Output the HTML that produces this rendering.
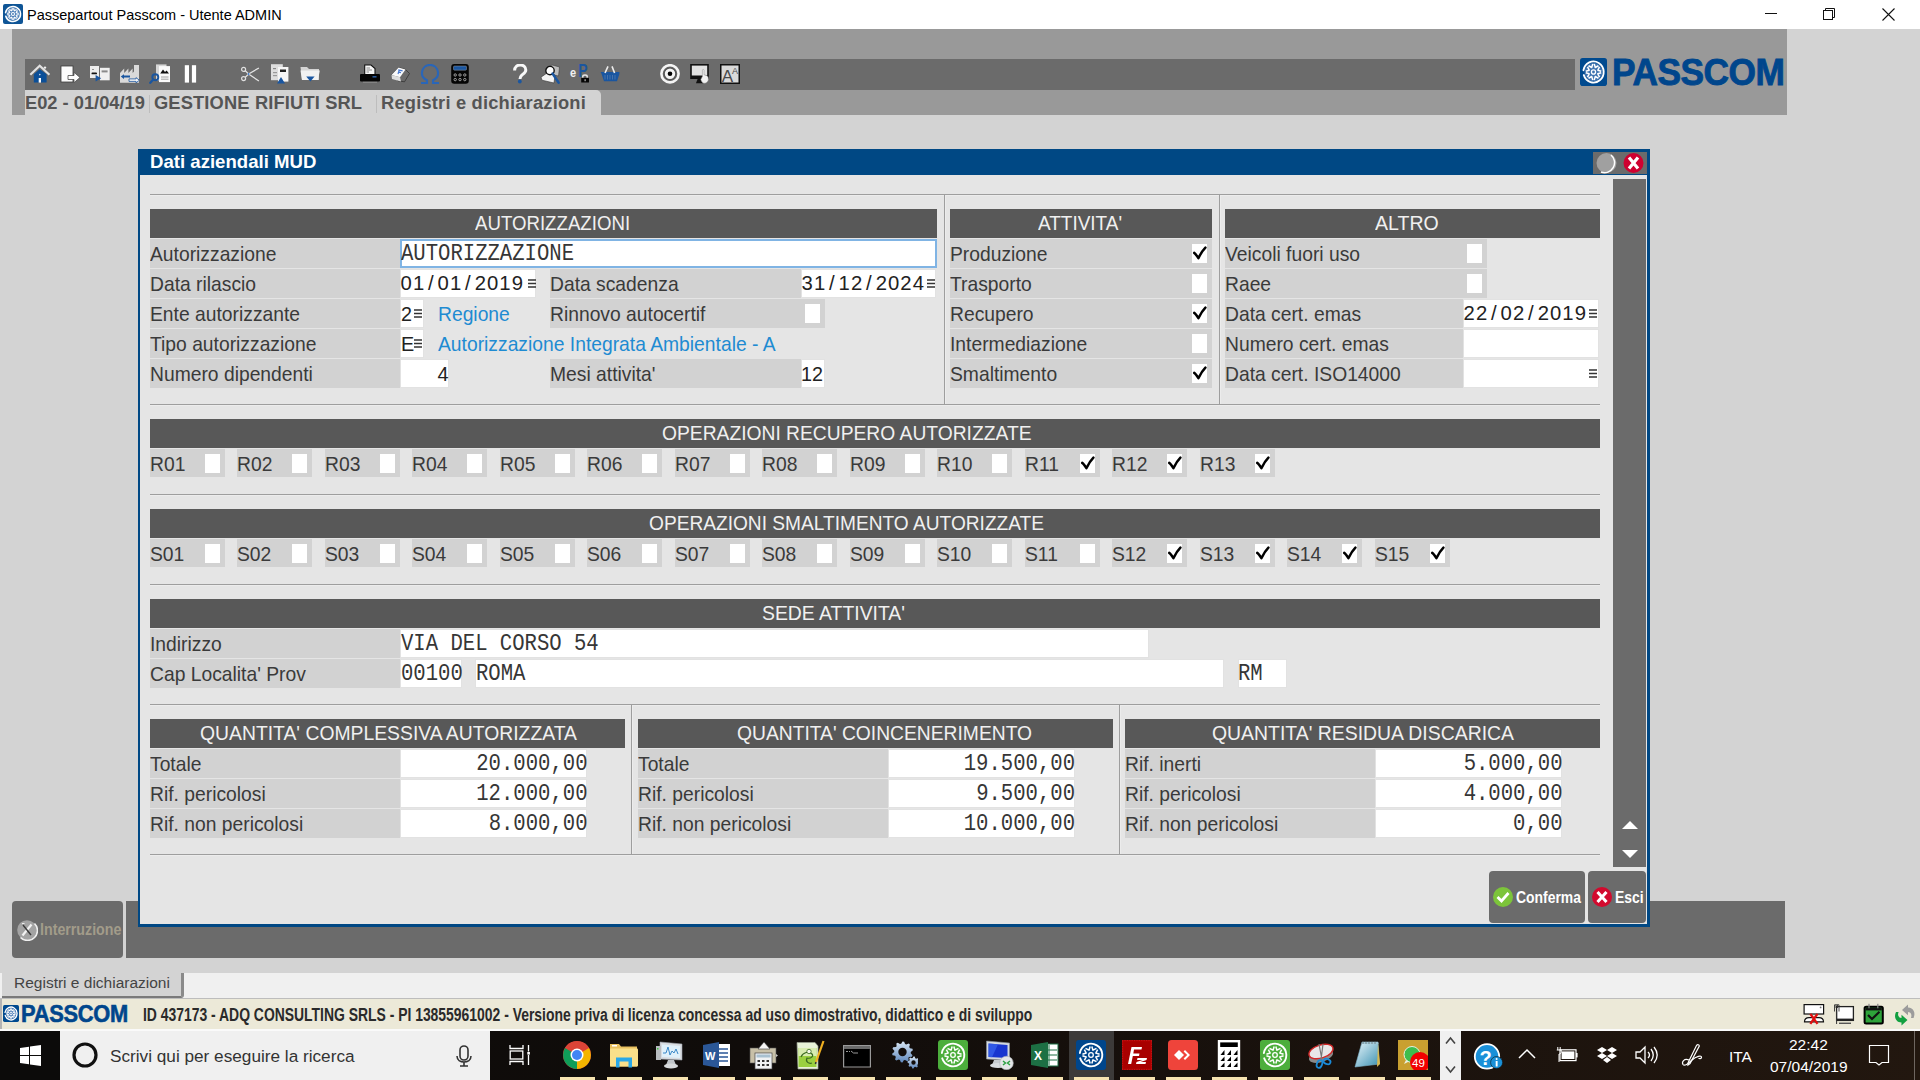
<!DOCTYPE html>
<html><head><meta charset="utf-8"><title>Passcom</title>
<style>
html,body{margin:0;padding:0;width:1920px;height:1080px;overflow:hidden;background:#d3d3d3}
body>div,body>svg{position:absolute}
</style></head><body>
<div style="left:0px;top:0px;width:1920px;height:29px;background:#ffffff;"></div>
<svg style="left:3px;top:4px" width="20" height="20" viewBox="0 0 30 30"><rect x="0" y="0" width="30" height="30" rx="3" fill="#0f5596"/><circle cx="15" cy="15" r="10" fill="#4f80b8"/><path d="M3.87 13.04 A11.3 11.3 0 1 1 4.19 18.30" fill="none" stroke="#fff" stroke-width="2.28" stroke-linecap="round"/><path d="M23.56 15.82 L19.80 16.99 L21.64 20.47 M20.47 21.64 L16.99 19.80 L15.82 23.56 M14.18 23.56 L13.01 19.80 L9.53 21.64 M8.36 20.47 L10.20 16.99 L6.44 15.82 M6.44 14.18 L10.20 13.01 L8.36 9.53 M9.53 8.36 L13.01 10.20 L14.18 6.44 M15.82 6.44 L16.99 10.20 L20.47 8.36 M21.64 9.53 L19.80 13.01 L23.56 14.18 " fill="none" stroke="#fff" stroke-width="1.80" stroke-linejoin="round"/><circle cx="15" cy="15" r="2.3" fill="none" stroke="#fff" stroke-width="1.56"/></svg>
<div style="left:27px;top:5.55px;white-space:nowrap;line-height:18.85px;font-family:'Liberation Sans', sans-serif;font-size:14.5px;color:#000;font-weight:normal;text-align:left;">Passepartout Passcom - Utente ADMIN</div>
<div style="left:1765px;top:13px;width:12px;height:1px;background:#111;"></div>
<svg style="left:1823px;top:8px" width="13" height="13" viewBox="0 0 13 13"><rect x="0.5" y="2.5" width="9" height="9" fill="none" stroke="#111" stroke-width="1"/><path d="M2.5 2 V0.5 H11.5 V9.5 H10" fill="none" stroke="#111" stroke-width="1"/></svg>
<svg style="left:1882px;top:8px" width="13" height="13" viewBox="0 0 13 13"><path d="M0.5 0.5 L12.5 12.5 M12.5 0.5 L0.5 12.5" stroke="#111" stroke-width="1.1"/></svg>
<div style="left:0px;top:29px;width:1920px;height:1001px;background:#d3d3d3;"></div>
<div style="left:12px;top:29px;width:1775px;height:86px;background:#999999;"></div>
<div style="left:25px;top:59px;width:1550px;height:31px;background:#6b6b6b;"></div>
<div style="left:25px;top:90px;width:576px;height:25px;background:#d3d3d3;border-top-right-radius:5px"></div>
<div style="left:25px;top:90.76px;white-space:nowrap;line-height:23.79px;font-family:'Liberation Sans', sans-serif;font-size:18.3px;color:#555;font-weight:bold;text-align:left;">E02 - 01/04/19</div>
<div style="left:149px;top:95px;width:1px;height:18px;background:#bdbdbd;"></div>
<div style="left:154px;top:90.76px;white-space:nowrap;line-height:23.79px;font-family:'Liberation Sans', sans-serif;font-size:18.3px;color:#555;font-weight:bold;text-align:left;letter-spacing:0.15px">GESTIONE RIFIUTI SRL</div>
<div style="left:376px;top:95px;width:1px;height:18px;background:#bdbdbd;"></div>
<div style="left:381px;top:90.76px;white-space:nowrap;line-height:23.79px;font-family:'Liberation Sans', sans-serif;font-size:18.3px;color:#555;font-weight:bold;text-align:left;letter-spacing:0.2px">Registri e dichiarazioni</div>
<svg style="left:1580px;top:58px" width="27" height="28" viewBox="0 0 30 30" preserveAspectRatio="none"><rect x="0" y="0" width="30" height="30" rx="3" fill="#004a8f"/><circle cx="15" cy="15" r="10" fill="#3f74b0"/><path d="M3.87 13.04 A11.3 11.3 0 1 1 4.19 18.30" fill="none" stroke="#fff" stroke-width="2.09" stroke-linecap="round"/><path d="M23.56 15.82 L19.80 16.99 L21.64 20.47 M20.47 21.64 L16.99 19.80 L15.82 23.56 M14.18 23.56 L13.01 19.80 L9.53 21.64 M8.36 20.47 L10.20 16.99 L6.44 15.82 M6.44 14.18 L10.20 13.01 L8.36 9.53 M9.53 8.36 L13.01 10.20 L14.18 6.44 M15.82 6.44 L16.99 10.20 L20.47 8.36 M21.64 9.53 L19.80 13.01 L23.56 14.18 " fill="none" stroke="#fff" stroke-width="1.65" stroke-linejoin="round"/><circle cx="15" cy="15" r="2.3" fill="none" stroke="#fff" stroke-width="1.43"/></svg>
<div style="left:1612px;top:48.13px;white-space:nowrap;line-height:48.75px;font-family:'Liberation Sans', sans-serif;font-size:37.5px;color:#00468c;font-weight:bold;text-align:left;transform:scale(0.94,1);transform-origin:0px 37.37px;letter-spacing:-0.5px;-webkit-text-stroke:0.9px #00468c">PASSCOM</div>
<svg style="left:29px;top:64px" width="22" height="21" viewBox="0 0 22 21"><path d="M1.3 10.7 L10.7 1.8 L20.4 10.7" fill="none" stroke="#e2e2e2" stroke-width="2.2"/><circle cx="16" cy="3.6" r="1.2" fill="#f0f0f0"/><path d="M4.8 10.2 L10.7 5.2 L17.6 10.2 V18.6 H4.8 Z" fill="#0b4f98"/><rect x="9.7" y="14" width="2.3" height="4.6" fill="#fff"/><circle cx="10.8" cy="10.6" r="0.8" fill="#cfd8e8"/></svg>
<svg style="left:60px;top:64px" width="22" height="21" viewBox="0 0 22 21"><rect x="1" y="2" width="12" height="16" fill="#fcfcfc" stroke="#3c3c3c" stroke-width="0.8"/><path d="M8 11.5 H14 V8.3 L20 13.5 L14 18.7 V15.5 H8 Z" fill="#fdfdfd" stroke="#4a4a4a" stroke-width="0.8"/></svg>
<svg style="left:89px;top:64px" width="22" height="21" viewBox="0 0 22 21"><rect x="1" y="2" width="9" height="12" fill="#ececec"/><rect x="2.5" y="8.4" width="5.5" height="1.9" rx="0.9" fill="#111"/><rect x="3" y="5" width="2" height="0.9" fill="#888"/><rect x="11" y="3.8" width="9.7" height="12.5" fill="#f0f0f0"/><rect x="12.6" y="6.4" width="6" height="2" fill="#8a8a8a"/><path d="M6.6 11 L12.2 14.3 L6.6 17.4 Z" fill="#1a56a0"/></svg>
<svg style="left:119px;top:64px" width="22" height="21" viewBox="0 0 22 21"><path d="M1 18.8 V9 L5.2 4.6 V9 L9.4 4.6 V9 L13.6 4.6 V9 L15 7.5 V1 H20 V18.8 Z" fill="#dadada"/><path d="M1.8 12.6 L5 10.2 V11.6 H11 V13.6 H5 V15 Z" fill="#1a56a0"/><path d="M10 14.9 H17 V13.6 L20.4 16.2 L17 18.8 V17.4 H10 Z" fill="#f4f4f4" stroke="#1a56a0" stroke-width="0.8"/></svg>
<svg style="left:149px;top:64px" width="22" height="21" viewBox="0 0 22 21"><rect x="7" y="0.4" width="10.5" height="16" fill="#d6d6d6"/><rect x="10" y="2.1" width="11" height="16" fill="#fafafa"/><path d="M11.2 9.6 L14 5.6 L16 8 L17.6 6.6 L20 9.6 Z" fill="#111"/><path d="M12 13 H19.5 M12 15.2 H19.5" stroke="#9a9a9a" stroke-width="0.9"/><circle cx="6.3" cy="13.3" r="3" fill="none" stroke="#1a56a0" stroke-width="1.9"/><path d="M4.2 15.6 L1.3 18.8" stroke="#1a56a0" stroke-width="2.3" stroke-linecap="round"/></svg>
<svg style="left:182px;top:64px" width="22" height="21" viewBox="0 0 22 21"><rect x="2.8" y="1.2" width="4.2" height="17.4" fill="#fff"/><rect x="9.9" y="1.2" width="4.2" height="17.4" fill="#fff"/></svg>
<svg style="left:240px;top:64px" width="22" height="21" viewBox="0 0 22 21"><circle cx="3.6" cy="5.4" r="2" fill="none" stroke="#e0e0e0" stroke-width="1.2"/><circle cx="3.6" cy="14.6" r="2" fill="none" stroke="#e0e0e0" stroke-width="1.2"/><path d="M5.2 6.6 L8.6 10 L18.9 4 M5.2 13.4 L8.6 10 L18.9 17" fill="none" stroke="#e4e4e4" stroke-width="1.3"/><circle cx="8.6" cy="10" r="0.9" fill="#3a7ad0"/></svg>
<svg style="left:270px;top:64px" width="22" height="21" viewBox="0 0 22 21"><rect x="1" y="0.2" width="11.8" height="16" fill="#dedede"/><rect x="3" y="4" width="3" height="1.2" fill="#888"/><rect x="3" y="8" width="4" height="1.2" fill="#999"/><rect x="3" y="11" width="4" height="1.2" fill="#999"/><rect x="8" y="3" width="10.4" height="14.6" fill="#f6f6f6"/><rect x="10" y="5.5" width="6" height="2.5" fill="#222"/><path d="M7 19.4 L11 12.9 L15 19.4 Z" fill="#1a56a0"/></svg>
<svg style="left:300px;top:64px" width="22" height="21" viewBox="0 0 22 21"><path d="M0.5 3 H7 L9 5 H19 V16 H2 Z" fill="#d4d4d4"/><path d="M0.5 6.5 H19.8 L18 16 H2 Z" fill="#f2f2f2"/><path d="M6.2 12.4 H14.6 L10.4 17.6 Z" fill="#1a56a0"/></svg>
<svg style="left:359px;top:64px" width="22" height="21" viewBox="0 0 22 21"><path d="M5.7 1 H12 L16 4.5 V11 H5.7 Z" fill="#f6f6f6" stroke="#111" stroke-width="1.1"/><path d="M7.5 4 H11 M7.5 6 H13 M7.5 8 H10" stroke="#777" stroke-width="0.8"/><rect x="1" y="10" width="20" height="7.4" rx="1" fill="#050505"/><rect x="13.5" y="12" width="4" height="1.6" fill="#2a5a9a"/><rect x="4" y="17.8" width="14" height="1" fill="#8a8a8a"/></svg>
<svg style="left:389px;top:64px" width="22" height="21" viewBox="0 0 22 21"><path d="M2.5 11 L9.5 3.5 L16.5 5.5 L20.5 9.5 L15.5 17.8 L9 16.8 Z" fill="#6a6a6a" stroke="#2c2c2c" stroke-width="0.7"/><path d="M2.5 11 L9.5 3.5 L16.5 5.5 L11 13.2 Z" fill="#fafafa"/><path d="M9.2 5.8 L13.6 6.8 M10.2 6.3 L9 10 M9.6 8.2 L12 8.6" stroke="#4a7ad0" stroke-width="1.2"/><path d="M2.5 11 L11 13.2 L12 17.6 L3 15 Z" fill="#dedede"/></svg>
<svg style="left:419px;top:64px" width="22" height="21" viewBox="0 0 22 21"><path d="M2 19 H8 V16.3 C4.2 14.5 2.6 11.2 3 8.2 C3.7 3.6 7 0.9 11 0.9 C15 0.9 18.3 3.6 19 8.2 C19.4 11.2 17.8 14.5 14 16.3 V19 H20" fill="none" stroke="#2a66b8" stroke-width="2.1"/></svg>
<svg style="left:450px;top:64px" width="22" height="21" viewBox="0 0 22 21"><rect x="1.2" y="0" width="17.6" height="19.8" rx="3" fill="#050505"/><rect x="3.5" y="2" width="13" height="4.2" rx="1" fill="#1a56a0" stroke="#9a9a9a" stroke-width="0.5"/><g fill="none" stroke="#bdbdbd" stroke-width="0.8"><circle cx="5.2" cy="11" r="1.2"/><circle cx="10" cy="11" r="1.2"/><circle cx="14.8" cy="11" r="1.2"/><circle cx="5.2" cy="15.6" r="1.2"/><circle cx="10" cy="15.6" r="1.2"/><circle cx="14.8" cy="15.6" r="1.2"/></g></svg>
<svg style="left:512px;top:64px" width="22" height="21" viewBox="0 0 22 21"><path d="M2.6 6.6 C2.6 2.8 5.4 1 8.3 1 C11.4 1 13.8 3.1 13.8 6 C13.8 8.8 11.2 9.9 9.6 11.3 C8.6 12.2 8 13.2 8 15" fill="none" stroke="#f8f8f8" stroke-width="3"/><circle cx="7.8" cy="17.5" r="1.9" fill="#1a56a0"/></svg>
<svg style="left:540px;top:64px" width="22" height="21" viewBox="0 0 22 21"><path d="M6 5 L12 1 L19.5 3 L18.5 12 L10 10 Z" fill="#bdbdbd" stroke="#333" stroke-width="0.5"/><path d="M1 13.2 L7 9 L15 11 L14 19 L2 16.2 Z" fill="#f4f4f4" stroke="#333" stroke-width="0.6"/><circle cx="10" cy="6.6" r="4.2" fill="#fff" stroke="#111" stroke-width="1.4"/><path d="M12.6 9.6 L18.6 18.6" stroke="#1a56a0" stroke-width="2.6" stroke-linecap="round"/></svg>
<svg style="left:569px;top:64px" width="22" height="21" viewBox="0 0 22 21"><text x="1.3" y="13.5" font-family="Liberation Sans" font-weight="bold" font-size="13" fill="#f0f0f0" transform="scale(0.85,1)">e</text><text x="11.5" y="13.3" font-family="Liberation Sans" font-weight="bold" font-size="17.5" fill="#1a56a0" transform="scale(0.8,1)">P</text><path d="M13.8 14 V12.5 C13.8 10.5 18.2 10.5 18.2 12.5 V14" fill="none" stroke="#e8e8e8" stroke-width="1.5"/><rect x="12.2" y="13.8" width="7.8" height="4.8" rx="0.6" fill="#050505"/><rect x="15.6" y="15.2" width="1" height="2" fill="#ddd"/></svg>
<svg style="left:600px;top:64px" width="22" height="21" viewBox="0 0 22 21"><path d="M0.6 8 H19.4 V10 L17 17.2 H4 L1.6 10 Z" fill="#1a56a0"/><path d="M5 11 V15.5 M7.5 11 V15.5 M10 11 V15.5 M12.5 11 V15.5 M15 11 V15.5" stroke="#5a80b0" stroke-width="0.7"/><path d="M5 9 L8 2.4 M14.6 9 L12 2.4" stroke="#ececec" stroke-width="1.6"/></svg>
<svg style="left:659px;top:64px" width="22" height="21" viewBox="0 0 22 21"><circle cx="11" cy="9.8" r="8.6" fill="none" stroke="#f4f4f4" stroke-width="2.6"/><circle cx="11" cy="9.8" r="5.9" fill="#f4f4f4" stroke="#555" stroke-width="1.4"/><circle cx="11" cy="9.8" r="2.3" fill="#000"/></svg>
<svg style="left:690px;top:64px" width="22" height="21" viewBox="0 0 22 21"><rect x="1" y="0.8" width="17" height="13.4" fill="#e2e2e2" stroke="#111" stroke-width="1.6"/><rect x="1" y="11.5" width="17" height="3" fill="#111"/><path d="M6 19.3 L7.6 15 H11.4 L13 19.3 Z" fill="#111"/><path d="M12.4 12.5 V6.2 C12.4 5.2 14 5.2 14 6.2 V10.8 L16.3 11.4 C17.7 11.8 18.4 13 18.4 15 C18.4 17.6 16.6 19.2 14.5 19.2 C12.6 19.2 11.4 17.6 10.8 15.4 Z" fill="#f2f2f2" stroke="#8a8a8a" stroke-width="0.5"/></svg>
<svg style="left:720px;top:64px" width="22" height="21" viewBox="0 0 22 21"><rect x="0.75" y="0.75" width="18.5" height="18.5" fill="#dadada" stroke="#111" stroke-width="1.5"/><text x="1.8" y="17.6" font-family="Liberation Sans" font-size="17" fill="#4a4a4a">A</text><text x="12" y="9.5" font-family="Liberation Sans" font-size="9" fill="#4a4a4a">A</text></svg>
<div style="left:12px;top:901px;width:111px;height:57px;background:#6b6b6b;border-radius:4px"></div>
<div style="left:126px;top:901px;width:1659px;height:57px;background:#6b6b6b;"></div>
<svg style="left:16px;top:919px" width="22" height="22" viewBox="0 0 22 22"><circle cx="11" cy="11" r="9.8" fill="#a3a3a3"/><path d="M18.5 4.5 A9.8 9.8 0 0 1 4.5 18.5" fill="none" stroke="#f0f0f0" stroke-width="1.6"/><path d="M6.5 16.5 L15.5 5.5" stroke="#f2f2f2" stroke-width="2.2"/><path d="M7 6 L15 16" stroke="#3a3a3a" stroke-width="1.4"/><path d="M6 4.5 L8.5 4.5" stroke="#eee" stroke-width="1"/></svg>
<div style="left:40px;top:919.06px;white-space:nowrap;line-height:21.45px;font-family:'Liberation Sans', sans-serif;font-size:16.5px;color:#a29c8a;font-weight:bold;text-align:left;transform:scale(0.862,1);transform-origin:0px 16.44px;">Interruzione</div>
<div style="left:0px;top:958px;width:1920px;height:15px;background:#d3d3d3;"></div>
<div style="left:0px;top:973px;width:1920px;height:25px;background:#f0f0f0;"></div>
<div style="left:2px;top:973px;width:179px;height:23px;background:#d3d3d3;border-right:3px solid #8a8a8a;border-bottom:2px solid #7a7a7a;border-bottom-right-radius:3px"></div>
<div style="left:14px;top:973.05px;white-space:nowrap;line-height:20.15px;font-family:'Liberation Sans', sans-serif;font-size:15.5px;color:#444;font-weight:normal;text-align:left;">Registri e dichiarazioni</div>
<div style="left:0px;top:998px;width:1920px;height:31px;background:#ece9d8;"></div>
<div style="left:0px;top:998px;width:2px;height:31px;background:#b4b4b4;"></div>
<div style="left:0px;top:998px;width:1920px;height:1px;background:#bdbdbd;"></div>
<svg style="left:3px;top:1005px" width="16" height="17" viewBox="0 0 30 30" preserveAspectRatio="none"><rect x="0" y="0" width="30" height="30" rx="3" fill="#004a8f"/><circle cx="15" cy="15" r="10" fill="#4f80b8"/><path d="M3.87 13.04 A11.3 11.3 0 1 1 4.19 18.30" fill="none" stroke="#fff" stroke-width="2.47" stroke-linecap="round"/><path d="M23.56 15.82 L19.80 16.99 L21.64 20.47 M20.47 21.64 L16.99 19.80 L15.82 23.56 M14.18 23.56 L13.01 19.80 L9.53 21.64 M8.36 20.47 L10.20 16.99 L6.44 15.82 M6.44 14.18 L10.20 13.01 L8.36 9.53 M9.53 8.36 L13.01 10.20 L14.18 6.44 M15.82 6.44 L16.99 10.20 L20.47 8.36 M21.64 9.53 L19.80 13.01 L23.56 14.18 " fill="none" stroke="#fff" stroke-width="1.95" stroke-linejoin="round"/><circle cx="15" cy="15" r="2.3" fill="none" stroke="#fff" stroke-width="1.69"/></svg>
<div style="left:21px;top:998.58px;white-space:nowrap;line-height:30.55px;font-family:'Liberation Sans', sans-serif;font-size:23.5px;color:#00468c;font-weight:bold;text-align:left;transform:scale(0.93,1);transform-origin:0px 23.42px;letter-spacing:-0.3px;-webkit-text-stroke:0.6px #00468c">PASSCOM</div>
<div style="left:143px;top:1004.06px;white-space:nowrap;line-height:23.4px;font-family:'Liberation Sans', sans-serif;font-size:18px;color:#2a2a2a;font-weight:bold;text-align:left;transform:scaleX(0.773);transform-origin:0 0">ID 437173 - ADQ CONSULTING SRLS - PI 13855961002 - Versione priva di licenza concessa ad uso dimostrativo, didattico e di sviluppo</div>
<svg style="left:1802px;top:1004px" width="24" height="21" viewBox="0 0 24 21"><rect x="2.1" y="0.6" width="19.5" height="9.4" fill="#fff" stroke="#111" stroke-width="1.2"/><circle cx="18.6" cy="3.4" r="0.9" fill="#777"/><path d="M2.5 17.8 C2.5 14.2 5 13.6 7 13.6 H17 C19 13.6 21.5 14.2 21.5 17.8 Z" fill="#fff" stroke="#111" stroke-width="1.2"/><path d="M8.3 9.8 L15.5 19.8 M15.5 9.8 L8.3 19.8" stroke="#e00e0e" stroke-width="2.3"/></svg>
<svg style="left:1833px;top:1004px" width="22" height="21" viewBox="0 0 22 21"><rect x="3.6" y="2.6" width="16.8" height="13.8" fill="#fff" stroke="#222" stroke-width="1.3"/><rect x="3" y="14.6" width="18" height="2.4" fill="#222"/><path d="M1.5 7.5 V0.8 H6 V7.5 M3 0.8 V4 M4.5 0.8 V4" fill="none" stroke="#333" stroke-width="0.9"/><path d="M3.6 7 V20" stroke="#333" stroke-width="1"/><rect x="6" y="18.6" width="12" height="1.4" fill="#555"/></svg>
<svg style="left:1863px;top:1003px" width="22" height="22" viewBox="0 0 22 22"><rect x="1.6" y="3.8" width="18.2" height="16.8" rx="1.5" fill="#2ea33a" stroke="#000" stroke-width="2"/><rect x="2.6" y="4.8" width="16.2" height="2.6" fill="#111"/><path d="M5 12 L9 16 L16.5 8.8" fill="none" stroke="#111" stroke-width="2.2"/><rect x="5.4" y="0.8" width="1.2" height="4.5" fill="#888"/><rect x="14.2" y="0.8" width="1.2" height="4.5" fill="#888"/></svg>
<svg style="left:1892px;top:1004px" width="26" height="22" viewBox="0 0 26 22"><path d="M4 8 C1.5 13 4 18.5 9.5 18.5 V21.5 L15.5 16 L9.5 10.8 V14 C6.6 14 5.2 11 6.6 8 Z" fill="#12a040"/><path d="M21.5 14 C24 9 21.5 3.5 16 3.5 V0.5 L10 6 L16 11.2 V8 C18.9 8 20.3 11 18.9 14 Z" fill="#9c9c9c"/></svg>
<div style="left:0px;top:1029px;width:1920px;height:2px;background:#fafafa;"></div>
<div style="left:0px;top:1031px;width:1920px;height:49px;background:linear-gradient(90deg,#0d0b0a 0%,#100c0a 40%,#1a120d 70%,#22170f 100%);"></div>
<div style="left:0px;top:1031px;width:60px;height:49px;background:#0c0b0a;"></div>
<svg style="left:20px;top:1045px" width="21" height="21" viewBox="0 0 21 21"><path d="M0 3 L9 1.7 V10 H0 Z M10 1.5 L21 0 V10 H10 Z M0 11 H9 V19.3 L0 18 Z M10 11 H21 V21 L10 19.5 Z" fill="#fff"/></svg>
<div style="left:60px;top:1031px;width:430px;height:49px;background:#f0f0f0;"></div>
<svg style="left:72px;top:1042px" width="26" height="26" viewBox="0 0 26 26"><circle cx="13" cy="13" r="11" fill="none" stroke="#111" stroke-width="3.2"/></svg>
<div style="left:110px;top:1044.86px;white-space:nowrap;line-height:22.36px;font-family:'Liberation Sans', sans-serif;font-size:17.2px;color:#333;font-weight:normal;text-align:left;">Scrivi qui per eseguire la ricerca</div>
<svg style="left:456px;top:1045px" width="16" height="22" viewBox="0 0 16 22"><rect x="4" y="1" width="8" height="14" rx="4" fill="none" stroke="#333" stroke-width="1.6"/><path d="M1 11 C1 19 15 19 15 11 M8 17 V21 M4 21 H12" fill="none" stroke="#333" stroke-width="1.6"/></svg>
<svg style="left:508px;top:1043px" width="24" height="24" viewBox="0 0 24 24"><path d="M2 2 V5.5 H15 V2 M2 22 V18.5 H15 V22" fill="none" stroke="#fff" stroke-width="1.3"/><rect x="2.2" y="8" width="12.6" height="8" fill="none" stroke="#fff" stroke-width="1.3"/><path d="M20.5 2 V8.5 M20.5 12 V22" stroke="#fff" stroke-width="1.3"/><rect x="19.3" y="9" width="2.6" height="2.6" fill="#fff"/></svg>
<div style="left:1069px;top:1031px;width:45px;height:49px;background:#3c3a39;"></div>
<svg style="left:562.0px;top:1040.0px" width="30" height="30" viewBox="0 0 30 30"><circle cx="15" cy="15" r="14" fill="#db4437"/><path d="M15 15 L27 8 A14 14 0 0 0 3 8 Z" fill="#db4437"/><path d="M15 15 L3 8 A14 14 0 0 0 15 29 Z" fill="#0f9d58"/><path d="M15 15 L15 29 A14 14 0 0 0 27 8 Z" fill="#f4b400"/><circle cx="15" cy="15" r="6.5" fill="#fff"/><circle cx="15" cy="15" r="5" fill="#4285f4"/></svg>
<svg style="left:609.0px;top:1040.0px" width="30" height="30" viewBox="0 0 30 30"><path d="M1 4 H10 L12 6.5 H28 V26.5 H1 Z" fill="#e8c060"/><rect x="1" y="8.5" width="28" height="18" rx="1" fill="#fae08a"/><rect x="3" y="5" width="5" height="1.5" fill="#fff"/><path d="M7 27.5 V17.5 H23 V27.5 H19.5 V21.5 H10.5 V27.5 Z" fill="#2aa8e8"/></svg>
<svg style="left:655.0px;top:1040.0px" width="30" height="30" viewBox="0 0 30 30"><path d="M5 2 L27 4 V20 L5 19 Z" fill="#d8dce0" stroke="#9aa0a8" stroke-width="0.6"/><path d="M7 4.5 L25 6 V18 L7 17 Z" fill="#dff0fa"/><path d="M8 13 L11 13 L13 7 L15 15 L17 11 L19 13 L21 9 L23 14" fill="none" stroke="#3a88c8" stroke-width="1"/><rect x="1" y="6" width="5" height="14" fill="#b8bcc0"/><rect x="2" y="8" width="1.5" height="1.5" fill="#40c040"/><path d="M13 20 L11 25 H21 L19 20 Z" fill="#c0c4c8"/><ellipse cx="16" cy="26" rx="7" ry="2.6" fill="#d8dadc"/></svg>
<svg style="left:702.0px;top:1040.0px" width="30" height="30" viewBox="0 0 30 30"><rect x="10" y="4" width="18" height="22" fill="#fff"/><path d="M12 9 H26 M12 13 H26 M12 17 H26 M12 21 H26" stroke="#2b5797" stroke-width="1.5"/><path d="M1 5 L17 2 V28 L1 25 Z" fill="#2b5797"/><text x="3" y="20" font-family="Liberation Sans" font-weight="bold" font-size="11" fill="#fff">W</text></svg>
<svg style="left:748.0px;top:1040.0px" width="30" height="30" viewBox="0 0 30 30"><rect x="2" y="8" width="26" height="15" fill="#c8c0a8" stroke="#555" stroke-width="0.6"/><path d="M10 9 L16 2 L22 9 Z" fill="#f4f4f4" stroke="#333" stroke-width="0.6"/><rect x="7" y="13" width="17" height="16" fill="#f0f2f4" stroke="#444" stroke-width="0.7"/><rect x="8.5" y="14.5" width="14" height="3" fill="#a8c0d0"/><g fill="#333"><rect x="9.5" y="20" width="2.5" height="2"/><rect x="14" y="20" width="2.5" height="2"/><rect x="18.5" y="20" width="2.5" height="2"/><rect x="9.5" y="24" width="2.5" height="2"/><rect x="14" y="24" width="2.5" height="2"/><rect x="18.5" y="24" width="2.5" height="2"/></g><path d="M28 14 L30 15.5 L28 17 Z" fill="#ccc"/></svg>
<svg style="left:795.0px;top:1040.0px" width="30" height="30" viewBox="0 0 30 30"><path d="M2 2.5 H20 L23 6 V29 H3 Z" fill="#e8f2d8" stroke="#9aa090" stroke-width="0.7"/><rect x="3.5" y="8" width="18" height="19" fill="#9ad040"/><rect x="3.5" y="8" width="18" height="8" fill="#d8ecb0"/><path d="M6 17 C8 12 14 11 17 14 C19 16 16 19 12 18 C10 22 14 24 17 23" fill="none" stroke="#3a6a20" stroke-width="1.2"/><circle cx="14" cy="11.5" r="2.2" fill="#f4f8e8" stroke="#3a6a20" stroke-width="0.8"/><path d="M28.5 1 L21 22" stroke="#f0b020" stroke-width="2.2"/><path d="M21 22 L20.4 24" stroke="#333" stroke-width="1.5"/></svg>
<svg style="left:842.0px;top:1040.0px" width="30" height="30" viewBox="0 0 30 30"><rect x="1" y="5" width="28" height="22.5" fill="#9a9a9a"/><rect x="2" y="6" width="26" height="4" fill="#6a6a6a"/><rect x="2.2" y="9" width="25.6" height="17.5" fill="#000"/><path d="M4 11.5 H6 M7 11.5 H8 M9 11 L11.5 13 H16" stroke="#aaa" stroke-width="0.9" fill="none"/></svg>
<svg style="left:888.0px;top:1040.0px" width="30" height="30" viewBox="0 0 30 30"><defs><linearGradient id="gg" x1="0" y1="0" x2="0" y2="1"><stop offset="0" stop-color="#d8e6f4"/><stop offset="1" stop-color="#5f88bc"/></linearGradient></defs><path d="M14.50,1.50 L16.14,1.63 L17.06,4.11 L18.27,4.60 L20.67,3.51 L21.92,4.58 L21.21,7.12 L21.90,8.23 L24.49,8.76 L24.87,10.36 L22.80,12.00 L22.70,13.30 L24.49,15.24 L23.86,16.77 L21.21,16.88 L20.37,17.87 L20.67,20.49 L19.27,21.36 L17.06,19.89 L15.80,20.20 L14.50,22.50 L12.86,22.37 L11.94,19.89 L10.73,19.40 L8.33,20.49 L7.08,19.42 L7.79,16.88 L7.10,15.77 L4.51,15.24 L4.13,13.64 L6.20,12.00 L6.30,10.70 L4.51,8.76 L5.14,7.23 L7.79,7.12 L8.63,6.13 L8.33,3.51 L9.73,2.64 L11.94,4.11 L13.20,3.80 Z M18.70,12.00 A4.2,4.2 0 1 0 10.30,12.00 A4.2,4.2 0 1 0 18.70,12.00 Z" fill="url(#gg)" fill-rule="evenodd"/><path d="M25.50,16.50 L26.67,16.62 L27.26,18.25 L28.06,18.68 L29.74,18.26 L30.49,19.17 L29.75,20.74 L30.01,21.60 L31.50,22.50 L31.38,23.67 L29.75,24.26 L29.32,25.06 L29.74,26.74 L28.83,27.49 L27.26,26.75 L26.40,27.01 L25.50,28.50 L24.33,28.38 L23.74,26.75 L22.94,26.32 L21.26,26.74 L20.51,25.83 L21.25,24.26 L20.99,23.40 L19.50,22.50 L19.62,21.33 L21.25,20.74 L21.68,19.94 L21.26,18.26 L22.17,17.51 L23.74,18.25 L24.60,17.99 Z M27.70,22.50 A2.2,2.2 0 1 0 23.30,22.50 A2.2,2.2 0 1 0 27.70,22.50 Z" fill="url(#gg)" fill-rule="evenodd"/></svg>
<svg style="left:938.0px;top:1040.0px" width="30" height="30" viewBox="0 0 30 30"><rect x="0" y="0" width="30" height="30" rx="3" fill="#4cae3c"/><path d="M3.87 13.04 A11.3 11.3 0 1 1 4.19 18.30" fill="none" stroke="#fff" stroke-width="1.90" stroke-linecap="round"/><path d="M23.56 15.82 L19.80 16.99 L21.64 20.47 M20.47 21.64 L16.99 19.80 L15.82 23.56 M14.18 23.56 L13.01 19.80 L9.53 21.64 M8.36 20.47 L10.20 16.99 L6.44 15.82 M6.44 14.18 L10.20 13.01 L8.36 9.53 M9.53 8.36 L13.01 10.20 L14.18 6.44 M15.82 6.44 L16.99 10.20 L20.47 8.36 M21.64 9.53 L19.80 13.01 L23.56 14.18 " fill="none" stroke="#fff" stroke-width="1.50" stroke-linejoin="round"/><circle cx="15" cy="15" r="2.3" fill="none" stroke="#fff" stroke-width="1.30"/></svg>
<svg style="left:984.0px;top:1040.0px" width="30" height="30" viewBox="0 0 30 30"><path d="M2.5 1 L25.5 3 V20.5 L2.5 19 Z" fill="#d4dae0" stroke="#8a9099" stroke-width="0.6"/><path d="M4.5 3.5 L23.5 5 V18 L4.5 17 Z" fill="#1836d0"/><path d="M4.5 3.5 L14 4.3 L8 17.2 L4.5 17 Z" fill="#3a66f0" opacity="0.7"/><path d="M10 20 L8 25 H20 L17 20 Z" fill="#c8ccd0"/><ellipse cx="14" cy="25.5" rx="8" ry="2.6" fill="#dadde0"/><circle cx="22.5" cy="23" r="6.8" fill="#e4e6e8" stroke="#b0b4b8" stroke-width="0.6"/><path d="M19 21 L21.5 23 L19 25 M26 21 L23.5 23 L26 25" fill="none" stroke="#2aa040" stroke-width="1.4"/></svg>
<svg style="left:1030.0px;top:1040.0px" width="30" height="30" viewBox="0 0 30 30"><rect x="11" y="4" width="17" height="22" fill="#fff" stroke="#1d7044" stroke-width="1"/><path d="M12 10 H27 M12 15 H27 M12 20 H27 M19 5 V25" stroke="#1d7044" stroke-width="1"/><path d="M1 5 L18 2 V28 L1 25 Z" fill="#1d7044"/><text x="4" y="20" font-family="Liberation Sans" font-weight="bold" font-size="12" fill="#fff">X</text></svg>
<svg style="left:1076.0px;top:1040.0px" width="30" height="30" viewBox="0 0 30 30"><rect x="0" y="0" width="30" height="30" rx="3" fill="#00468c"/><path d="M3.87 13.04 A11.3 11.3 0 1 1 4.19 18.30" fill="none" stroke="#fff" stroke-width="1.90" stroke-linecap="round"/><path d="M23.56 15.82 L19.80 16.99 L21.64 20.47 M20.47 21.64 L16.99 19.80 L15.82 23.56 M14.18 23.56 L13.01 19.80 L9.53 21.64 M8.36 20.47 L10.20 16.99 L6.44 15.82 M6.44 14.18 L10.20 13.01 L8.36 9.53 M9.53 8.36 L13.01 10.20 L14.18 6.44 M15.82 6.44 L16.99 10.20 L20.47 8.36 M21.64 9.53 L19.80 13.01 L23.56 14.18 " fill="none" stroke="#fff" stroke-width="1.50" stroke-linejoin="round"/><circle cx="15" cy="15" r="2.3" fill="none" stroke="#fff" stroke-width="1.30"/></svg>
<svg style="left:1122.0px;top:1040.0px" width="30" height="30" viewBox="0 0 30 30"><rect x="0" y="0" width="30" height="30" fill="#b00000" stroke="#c83030" stroke-width="1" stroke-dasharray="1.2 1.2"/><rect x="2" y="2" width="26" height="26" fill="#a80000"/><path d="M6 24 L9.5 7 H20 L19.5 9.5 H12 L11.3 13.5 H17.5 L17 16 H10.8 L9.2 24 Z" fill="#fff"/><path d="M15.5 18 H25 L24.5 20 L18.5 22 H24 L23.5 24 H14 L14.5 22 L20.5 20 H15 Z" fill="#fff"/></svg>
<svg style="left:1168.0px;top:1040.0px" width="30" height="30" viewBox="0 0 30 30"><rect x="0" y="0" width="30" height="30" rx="3.5" fill="#ef443b"/><path d="M6 15 L11 10 L16 15 L11 20 Z" fill="#fff"/><path d="M17 10 L22 15 L17 20 L15.6 18.6 L19.2 15 L15.6 11.4 Z" fill="#fff"/></svg>
<svg style="left:1214.0px;top:1040.0px" width="30" height="30" viewBox="0 0 30 30"><rect x="3.8" y="0" width="22.4" height="30" fill="#fff"/><rect x="6.2" y="2.4" width="17.6" height="4.6" fill="#000"/><g fill="#000"><path d="M6.5 15 L10.5 10 V15 Z"/><path d="M13 15 L17 10 V15 Z"/><path d="M19.5 15 L23.5 10 V15 Z"/><path d="M6.5 21 L10.5 16.5 V21 Z"/><path d="M13 21 L17 16.5 V21 Z"/><path d="M19.5 21 L23.5 16.5 V21 Z"/><path d="M6.5 27 L10.5 22.5 V27 Z"/><path d="M13 27 L17 22.5 V27 Z"/><path d="M19.5 27 L23.5 22.5 V27 Z"/></g></svg>
<svg style="left:1260.0px;top:1040.0px" width="30" height="30" viewBox="0 0 30 30"><rect x="0" y="0" width="30" height="30" rx="3" fill="#4cae3c"/><path d="M3.87 13.04 A11.3 11.3 0 1 1 4.19 18.30" fill="none" stroke="#fff" stroke-width="1.90" stroke-linecap="round"/><path d="M23.56 15.82 L19.80 16.99 L21.64 20.47 M20.47 21.64 L16.99 19.80 L15.82 23.56 M14.18 23.56 L13.01 19.80 L9.53 21.64 M8.36 20.47 L10.20 16.99 L6.44 15.82 M6.44 14.18 L10.20 13.01 L8.36 9.53 M9.53 8.36 L13.01 10.20 L14.18 6.44 M15.82 6.44 L16.99 10.20 L20.47 8.36 M21.64 9.53 L19.80 13.01 L23.56 14.18 " fill="none" stroke="#fff" stroke-width="1.50" stroke-linejoin="round"/><circle cx="15" cy="15" r="2.3" fill="none" stroke="#fff" stroke-width="1.30"/></svg>
<svg style="left:1306.0px;top:1040.0px" width="30" height="30" viewBox="0 0 30 30"><ellipse cx="15" cy="16" rx="12.5" ry="6" fill="#8a8a8a" transform="rotate(-18 15 16)"/><ellipse cx="15" cy="11.5" rx="12.5" ry="6.5" fill="#e8e8e8" stroke="#d02828" stroke-width="1.4" transform="rotate(-18 15 11.5)"/><path d="M13 4 L16 20 M17 4 L15 20" stroke="#777" stroke-width="1.2"/><ellipse cx="13.5" cy="24" rx="2.6" ry="4" fill="none" stroke="#1a8ad8" stroke-width="1.8" transform="rotate(20 13.5 24)"/><ellipse cx="21" cy="21.5" rx="3.6" ry="2.6" fill="none" stroke="#1a8ad8" stroke-width="1.8" transform="rotate(20 21 21.5)"/></svg>
<svg style="left:1352.0px;top:1040.0px" width="30" height="30" viewBox="0 0 30 30"><defs><linearGradient id="np" x1="0" y1="0" x2="1" y2="1"><stop offset="0" stop-color="#e8f6fc"/><stop offset="1" stop-color="#3a90b0"/></linearGradient></defs><path d="M10 2 H26 L27.5 24 L3 27 Z" fill="url(#np)" stroke="#7ab0c8" stroke-width="0.6"/><path d="M10 2 H26 L26.5 4 H10.5 Z" fill="#a0c8d8"/><path d="M26 3 L28 24 L25 27 Z" fill="#d8b850"/><path d="M11 1 V4 M14 1 V4 M17 1 V4 M20 1 V4 M23 1 V4" stroke="#555" stroke-width="0.6"/></svg>
<svg style="left:1398.0px;top:1040.0px" width="30" height="30" viewBox="0 0 30 30"><rect x="0" y="0" width="30" height="30" fill="#c9a030"/><circle cx="14" cy="14.5" r="8" fill="#3dbd4d" stroke="#e8f0e0" stroke-width="1"/><path d="M8 20 L6 24 L11 21.5 Z" fill="#e8f0e0"/><circle cx="22" cy="22" r="10" fill="#f20000"/><text x="14" y="27" font-family="Liberation Sans" font-size="11.5" fill="#fff">49</text></svg>
<div style="left:559.5px;top:1077px;width:35px;height:3px;background:#f6e3b0;"></div>
<div style="left:606.5px;top:1077px;width:35px;height:3px;background:#f6e3b0;"></div>
<div style="left:652.5px;top:1077px;width:35px;height:3px;background:#f6e3b0;"></div>
<div style="left:699.5px;top:1077px;width:35px;height:3px;background:#f6e3b0;"></div>
<div style="left:745.5px;top:1077px;width:35px;height:3px;background:#f6e3b0;"></div>
<div style="left:792.5px;top:1077px;width:35px;height:3px;background:#f6e3b0;"></div>
<div style="left:839.5px;top:1077px;width:35px;height:3px;background:#f6e3b0;"></div>
<div style="left:885.5px;top:1077px;width:35px;height:3px;background:#f6e3b0;"></div>
<div style="left:935.5px;top:1077px;width:35px;height:3px;background:#f6e3b0;"></div>
<div style="left:981.5px;top:1077px;width:35px;height:3px;background:#f6e3b0;"></div>
<div style="left:1027.5px;top:1077px;width:35px;height:3px;background:#f6e3b0;"></div>
<div style="left:1073.5px;top:1077px;width:35px;height:3px;background:#f6e3b0;"></div>
<div style="left:1119.5px;top:1077px;width:35px;height:3px;background:#f6e3b0;"></div>
<div style="left:1165.5px;top:1077px;width:35px;height:3px;background:#f6e3b0;"></div>
<div style="left:1211.5px;top:1077px;width:35px;height:3px;background:#f6e3b0;"></div>
<div style="left:1257.5px;top:1077px;width:35px;height:3px;background:#f6e3b0;"></div>
<div style="left:1303.5px;top:1077px;width:35px;height:3px;background:#f6e3b0;"></div>
<div style="left:1349.5px;top:1077px;width:35px;height:3px;background:#f6e3b0;"></div>
<div style="left:1395.5px;top:1077px;width:35px;height:3px;background:#f6e3b0;"></div>
<div style="left:1440px;top:1031px;width:21px;height:49px;background:#f0f0f0;"></div>
<svg style="left:1444px;top:1034px" width="13" height="42" viewBox="0 0 13 42"><path d="M2 9.5 L6.5 4 L11 9.5 M2 32.5 L6.5 38 L11 32.5" fill="none" stroke="#444" stroke-width="1.6"/></svg>
<svg style="left:1473px;top:1042px" width="32" height="32" viewBox="0 0 32 32"><circle cx="14" cy="14.4" r="12.2" fill="#1a90d8" stroke="#fff" stroke-width="1.8"/><text x="6.6" y="23" font-family="Liberation Sans" font-weight="bold" font-size="20" fill="#fff">?</text><circle cx="23.6" cy="20.5" r="6" fill="#1a90d8" stroke="#111" stroke-width="0.6"/><rect x="22.7" y="19" width="1.9" height="5.5" fill="#fff"/><circle cx="23.65" cy="16.9" r="1" fill="#fff"/></svg>
<svg style="left:1518px;top:1048px" width="18" height="12" viewBox="0 0 18 12"><path d="M1 10 L9 2 L17 10" fill="none" stroke="#fff" stroke-width="1.5"/></svg>
<svg style="left:1555px;top:1046px" width="24" height="18" viewBox="0 0 24 18"><rect x="5" y="3.8" width="16" height="10.8" fill="none" stroke="#fff" stroke-width="1.2"/><rect x="6.6" y="5.4" width="12.8" height="7.6" fill="#fff"/><rect x="21" y="7" width="1.6" height="4.4" fill="#fff"/><path d="M2.8 1 V4 M5.2 1 V4 M1.8 4 H6.2 V6.5 C6.2 8 4 8 4 8 V16" fill="none" stroke="#fff" stroke-width="1"/></svg>
<svg style="left:1597px;top:1046px" width="20" height="18" viewBox="0 0 20 18"><path d="M5 1 L10 4 L5 7 L0 4 Z M15 1 L20 4 L15 7 L10 4 Z M5 7 L10 10 L5 13 L0 10 Z M15 7 L20 10 L15 13 L10 10 Z M10 11 L14 14 L10 17 L6 14 Z" fill="#fff"/></svg>
<svg style="left:1635px;top:1045px" width="24" height="20" viewBox="0 0 24 20"><path d="M1 7 H5 L10 2 V18 L5 13 H1 Z" fill="none" stroke="#fff" stroke-width="1.3"/><path d="M13 7 C15 9 15 11 13 13 M16 4 C19 8 19 12 16 16 M19 2 C23 7 23 13 19 18" fill="none" stroke="#fff" stroke-width="1.3"/></svg>
<svg style="left:1680px;top:1043px" width="26" height="24" viewBox="0 0 26 24"><path d="M16.5 2.5 C17.5 1.2 19.2 1.6 19.3 3 L10 20.5 L8 22 L8.2 19.5 Z" fill="none" stroke="#fff" stroke-width="1.2"/><path d="M9 17 C4 15 1.5 19 3 21.5 C4.5 23.5 8 21 12 17 C16 13 22 12 21.5 14.5 C21.2 15.8 19.5 15.8 18.5 15.2" fill="none" stroke="#fff" stroke-width="1.2"/></svg>
<div style="left:1729px;top:1046.55px;white-space:nowrap;line-height:20.15px;font-family:'Liberation Sans', sans-serif;font-size:15.5px;color:#fff;font-weight:normal;text-align:left;">ITA</div>
<div style="left:1789px;top:1034.55px;white-space:nowrap;line-height:20.15px;font-family:'Liberation Sans', sans-serif;font-size:15.5px;color:#fff;font-weight:normal;text-align:left;">22:42</div>
<div style="left:1770px;top:1056.55px;white-space:nowrap;line-height:20.15px;font-family:'Liberation Sans', sans-serif;font-size:15.5px;color:#fff;font-weight:normal;text-align:left;">07/04/2019</div>
<svg style="left:1868px;top:1044px" width="22" height="22" viewBox="0 0 22 22"><path d="M1.5 1.5 H20.5 V18.5 H14 L11 21 L8 18.5 H1.5 Z" fill="none" stroke="#fff" stroke-width="1.2"/></svg>
<div style="left:1914px;top:1031px;width:1px;height:49px;background:#6e6660;"></div>
<div style="left:138px;top:149px;width:1512px;height:778px;background:#004884;"></div>
<div style="left:140px;top:175px;width:1507px;height:749px;background:#e5e5e5;"></div>
<div style="left:150px;top:150.47px;white-space:nowrap;line-height:24.18px;font-family:'Liberation Sans', sans-serif;font-size:18.6px;color:#fff;font-weight:bold;text-align:left;">Dati aziendali MUD</div>
<div style="left:1593px;top:152px;width:54px;height:22px;background:#6b6b6b;"></div>
<svg style="left:1595px;top:152px" width="50" height="22" viewBox="0 0 50 22"><circle cx="11.5" cy="11" r="10" fill="#a0a0a0"/><path d="M16 3 A10 10 0 0 1 6 20" fill="none" stroke="#fff" stroke-width="1.5"/><circle cx="38.5" cy="11" r="10" fill="#cf0030"/><path d="M34 5.5 L43 16.5 M43 5.5 L34 16.5" stroke="#fff" stroke-width="3.2"/></svg>
<div style="left:1613px;top:179px;width:33px;height:688px;background:#6b6b6b;"></div>
<svg style="left:1620px;top:816px" width="20" height="45" viewBox="0 0 20 45"><path d="M2 13 L10 5 L18 13 Z" fill="#fff"/><path d="M2 34 L10 42 L18 34 Z" fill="#fff"/></svg>
<div style="left:150px;top:194px;width:1450px;height:1px;background:#9e9e9e;"></div>
<div style="left:150px;top:195px;width:1450px;height:1px;background:#ececec;"></div>
<div style="left:150px;top:404px;width:1450px;height:1px;background:#9e9e9e;"></div>
<div style="left:150px;top:405px;width:1450px;height:1px;background:#ececec;"></div>
<div style="left:150px;top:494px;width:1450px;height:1px;background:#9e9e9e;"></div>
<div style="left:150px;top:495px;width:1450px;height:1px;background:#ececec;"></div>
<div style="left:150px;top:584px;width:1450px;height:1px;background:#9e9e9e;"></div>
<div style="left:150px;top:585px;width:1450px;height:1px;background:#ececec;"></div>
<div style="left:150px;top:704px;width:1450px;height:1px;background:#9e9e9e;"></div>
<div style="left:150px;top:705px;width:1450px;height:1px;background:#ececec;"></div>
<div style="left:150px;top:854px;width:1450px;height:1px;background:#9e9e9e;"></div>
<div style="left:150px;top:855px;width:1450px;height:1px;background:#ececec;"></div>
<div style="left:944px;top:195px;width:1px;height:209px;background:#9e9e9e;"></div>
<div style="left:945px;top:195px;width:1px;height:209px;background:#ececec;"></div>
<div style="left:1219px;top:195px;width:1px;height:209px;background:#9e9e9e;"></div>
<div style="left:1220px;top:195px;width:1px;height:209px;background:#ececec;"></div>
<div style="left:631px;top:705px;width:1px;height:149px;background:#9e9e9e;"></div>
<div style="left:632px;top:705px;width:1px;height:149px;background:#ececec;"></div>
<div style="left:1119px;top:705px;width:1px;height:149px;background:#9e9e9e;"></div>
<div style="left:1120px;top:705px;width:1px;height:149px;background:#ececec;"></div>
<div style="left:150px;top:209px;width:787px;height:29px;background:#585858;"></div>
<div style="left:475px;top:209.07px;white-space:nowrap;line-height:27.3px;font-family:'Liberation Sans', sans-serif;font-size:21px;color:#f0f0f0;font-weight:normal;text-align:left;transform:scale(0.888,1);transform-origin:0px 20.93px;">AUTORIZZAZIONI</div>
<div style="left:150px;top:239px;width:250px;height:29px;background:#d2d2d2;"></div>
<div style="left:150px;top:239.57px;white-space:nowrap;line-height:27.3px;font-family:'Liberation Sans', sans-serif;font-size:21px;color:#3a3a3a;font-weight:normal;text-align:left;transform:scale(0.918,1);transform-origin:0px 20.93px;">Autorizzazione</div>
<div style="left:400px;top:239px;width:537px;height:29px;background:#80b4e4;"></div>
<div style="left:402px;top:241px;width:533px;height:25px;background:#fff;"></div>
<div style="left:401px;top:241.62px;white-space:nowrap;line-height:26.78px;font-family:'Liberation Mono', monospace;font-size:20.6px;color:#363636;font-weight:normal;text-align:left;transform:scale(1,1.19);transform-origin:0px 18.88px;">AUTORIZZAZIONE</div>
<div style="left:150px;top:269px;width:250px;height:29px;background:#d2d2d2;"></div>
<div style="left:150px;top:269.57px;white-space:nowrap;line-height:27.3px;font-family:'Liberation Sans', sans-serif;font-size:21px;color:#3a3a3a;font-weight:normal;text-align:left;transform:scale(0.918,1);transform-origin:0px 20.93px;">Data rilascio</div>
<div style="left:400px;top:269px;width:136px;height:29px;background:#fff;box-sizing:border-box;border:1px solid #e2e2e2"></div>
<div style="left:400.0px;top:270.27px;width:12.35px;line-height:26.39px;font-family:'Liberation Sans', sans-serif;font-size:20.3px;color:#222;font-weight:normal;text-align:center;">0</div>
<div style="left:412.35px;top:270.27px;width:12.35px;line-height:26.39px;font-family:'Liberation Sans', sans-serif;font-size:20.3px;color:#222;font-weight:normal;text-align:center;">1</div>
<div style="left:424.7px;top:270.27px;width:12.35px;line-height:26.39px;font-family:'Liberation Sans', sans-serif;font-size:20.3px;color:#222;font-weight:normal;text-align:center;">/</div>
<div style="left:437.05px;top:270.27px;width:12.35px;line-height:26.39px;font-family:'Liberation Sans', sans-serif;font-size:20.3px;color:#222;font-weight:normal;text-align:center;">0</div>
<div style="left:449.4px;top:270.27px;width:12.35px;line-height:26.39px;font-family:'Liberation Sans', sans-serif;font-size:20.3px;color:#222;font-weight:normal;text-align:center;">1</div>
<div style="left:461.75px;top:270.27px;width:12.35px;line-height:26.39px;font-family:'Liberation Sans', sans-serif;font-size:20.3px;color:#222;font-weight:normal;text-align:center;">/</div>
<div style="left:474.1px;top:270.27px;width:12.35px;line-height:26.39px;font-family:'Liberation Sans', sans-serif;font-size:20.3px;color:#222;font-weight:normal;text-align:center;">2</div>
<div style="left:486.45px;top:270.27px;width:12.35px;line-height:26.39px;font-family:'Liberation Sans', sans-serif;font-size:20.3px;color:#222;font-weight:normal;text-align:center;">0</div>
<div style="left:498.8px;top:270.27px;width:12.35px;line-height:26.39px;font-family:'Liberation Sans', sans-serif;font-size:20.3px;color:#222;font-weight:normal;text-align:center;">1</div>
<div style="left:511.15px;top:270.27px;width:12.35px;line-height:26.39px;font-family:'Liberation Sans', sans-serif;font-size:20.3px;color:#222;font-weight:normal;text-align:center;">9</div>
<svg style="left:528px;top:279px" width="8" height="9" viewBox="0 0 8 9"><path d="M0 1 H8 M0 4.5 H8 M0 8 H8" stroke="#333" stroke-width="1.6"/></svg>
<div style="left:550px;top:269px;width:251px;height:29px;background:#d2d2d2;"></div>
<div style="left:550px;top:269.57px;white-space:nowrap;line-height:27.3px;font-family:'Liberation Sans', sans-serif;font-size:21px;color:#3a3a3a;font-weight:normal;text-align:left;transform:scale(0.918,1);transform-origin:0px 20.93px;">Data scadenza</div>
<div style="left:801px;top:269px;width:135px;height:29px;background:#fff;box-sizing:border-box;border:1px solid #e2e2e2"></div>
<div style="left:801.0px;top:270.27px;width:12.35px;line-height:26.39px;font-family:'Liberation Sans', sans-serif;font-size:20.3px;color:#222;font-weight:normal;text-align:center;">3</div>
<div style="left:813.35px;top:270.27px;width:12.35px;line-height:26.39px;font-family:'Liberation Sans', sans-serif;font-size:20.3px;color:#222;font-weight:normal;text-align:center;">1</div>
<div style="left:825.7px;top:270.27px;width:12.35px;line-height:26.39px;font-family:'Liberation Sans', sans-serif;font-size:20.3px;color:#222;font-weight:normal;text-align:center;">/</div>
<div style="left:838.05px;top:270.27px;width:12.35px;line-height:26.39px;font-family:'Liberation Sans', sans-serif;font-size:20.3px;color:#222;font-weight:normal;text-align:center;">1</div>
<div style="left:850.4px;top:270.27px;width:12.35px;line-height:26.39px;font-family:'Liberation Sans', sans-serif;font-size:20.3px;color:#222;font-weight:normal;text-align:center;">2</div>
<div style="left:862.75px;top:270.27px;width:12.35px;line-height:26.39px;font-family:'Liberation Sans', sans-serif;font-size:20.3px;color:#222;font-weight:normal;text-align:center;">/</div>
<div style="left:875.1px;top:270.27px;width:12.35px;line-height:26.39px;font-family:'Liberation Sans', sans-serif;font-size:20.3px;color:#222;font-weight:normal;text-align:center;">2</div>
<div style="left:887.45px;top:270.27px;width:12.35px;line-height:26.39px;font-family:'Liberation Sans', sans-serif;font-size:20.3px;color:#222;font-weight:normal;text-align:center;">0</div>
<div style="left:899.8px;top:270.27px;width:12.35px;line-height:26.39px;font-family:'Liberation Sans', sans-serif;font-size:20.3px;color:#222;font-weight:normal;text-align:center;">2</div>
<div style="left:912.15px;top:270.27px;width:12.35px;line-height:26.39px;font-family:'Liberation Sans', sans-serif;font-size:20.3px;color:#222;font-weight:normal;text-align:center;">4</div>
<svg style="left:927px;top:279px" width="8" height="9" viewBox="0 0 8 9"><path d="M0 1 H8 M0 4.5 H8 M0 8 H8" stroke="#333" stroke-width="1.6"/></svg>
<div style="left:150px;top:299px;width:250px;height:29px;background:#d2d2d2;"></div>
<div style="left:150px;top:299.57px;white-space:nowrap;line-height:27.3px;font-family:'Liberation Sans', sans-serif;font-size:21px;color:#3a3a3a;font-weight:normal;text-align:left;transform:scale(0.918,1);transform-origin:0px 20.93px;">Ente autorizzante</div>
<div style="left:400px;top:299px;width:24px;height:29px;background:#fff;box-sizing:border-box;border:1px solid #e2e2e2"></div>
<div style="left:401px;top:299.77px;white-space:nowrap;line-height:27.04px;font-family:'Liberation Sans', sans-serif;font-size:20.8px;color:#222;font-weight:normal;text-align:left;transform:scale(0.95,1);transform-origin:0px 20.73px;">2</div>
<svg style="left:414px;top:309px" width="8" height="9" viewBox="0 0 8 9"><path d="M0 1 H8 M0 4.5 H8 M0 8 H8" stroke="#333" stroke-width="1.6"/></svg>
<div style="left:438px;top:299.57px;white-space:nowrap;line-height:27.3px;font-family:'Liberation Sans', sans-serif;font-size:21px;color:#1e8bd2;font-weight:normal;text-align:left;transform:scale(0.918,1);transform-origin:0px 20.93px;">Regione</div>
<div style="left:550px;top:299px;width:275px;height:29px;background:#d2d2d2;"></div>
<div style="left:550px;top:299.57px;white-space:nowrap;line-height:27.3px;font-family:'Liberation Sans', sans-serif;font-size:21px;color:#3a3a3a;font-weight:normal;text-align:left;transform:scale(0.918,1);transform-origin:0px 20.93px;">Rinnovo autocertif</div>
<div style="left:805px;top:304px;width:15px;height:19px;background:#fff;"></div>
<div style="left:150px;top:329px;width:250px;height:29px;background:#d2d2d2;"></div>
<div style="left:150px;top:329.57px;white-space:nowrap;line-height:27.3px;font-family:'Liberation Sans', sans-serif;font-size:21px;color:#3a3a3a;font-weight:normal;text-align:left;transform:scale(0.918,1);transform-origin:0px 20.93px;">Tipo autorizzazione</div>
<div style="left:400px;top:329px;width:24px;height:29px;background:#fff;box-sizing:border-box;border:1px solid #e2e2e2"></div>
<div style="left:401px;top:329.77px;white-space:nowrap;line-height:27.04px;font-family:'Liberation Sans', sans-serif;font-size:20.8px;color:#222;font-weight:normal;text-align:left;transform:scale(0.95,1);transform-origin:0px 20.73px;">E</div>
<svg style="left:414px;top:339px" width="8" height="9" viewBox="0 0 8 9"><path d="M0 1 H8 M0 4.5 H8 M0 8 H8" stroke="#333" stroke-width="1.6"/></svg>
<div style="left:438px;top:329.57px;white-space:nowrap;line-height:27.3px;font-family:'Liberation Sans', sans-serif;font-size:21px;color:#1e8bd2;font-weight:normal;text-align:left;transform:scale(0.918,1);transform-origin:0px 20.93px;">Autorizzazione Integrata Ambientale - A</div>
<div style="left:150px;top:359px;width:250px;height:29px;background:#d2d2d2;"></div>
<div style="left:150px;top:359.57px;white-space:nowrap;line-height:27.3px;font-family:'Liberation Sans', sans-serif;font-size:21px;color:#3a3a3a;font-weight:normal;text-align:left;transform:scale(0.918,1);transform-origin:0px 20.93px;">Numero dipendenti</div>
<div style="left:400px;top:359px;width:49px;height:29px;background:#fff;box-sizing:border-box;border:1px solid #e2e2e2"></div>
<div style="left:400px;top:359.77px;width:48.5px;line-height:27.04px;font-family:'Liberation Sans', sans-serif;font-size:20.8px;color:#222;font-weight:normal;text-align:right;transform:scale(0.95,1);transform-origin:48.5px 20.73px;">4</div>
<div style="left:550px;top:359px;width:251px;height:29px;background:#d2d2d2;"></div>
<div style="left:550px;top:359.57px;white-space:nowrap;line-height:27.3px;font-family:'Liberation Sans', sans-serif;font-size:21px;color:#3a3a3a;font-weight:normal;text-align:left;transform:scale(0.918,1);transform-origin:0px 20.93px;">Mesi attivita'</div>
<div style="left:801px;top:359px;width:24px;height:29px;background:#fff;box-sizing:border-box;border:1px solid #e2e2e2"></div>
<div style="left:801px;top:359.77px;white-space:nowrap;line-height:27.04px;font-family:'Liberation Sans', sans-serif;font-size:20.8px;color:#222;font-weight:normal;text-align:left;transform:scale(0.95,1);transform-origin:0px 20.73px;">12</div>
<div style="left:950px;top:209px;width:262px;height:29px;background:#585858;"></div>
<div style="left:1037.5px;top:209.07px;white-space:nowrap;line-height:27.3px;font-family:'Liberation Sans', sans-serif;font-size:21px;color:#f0f0f0;font-weight:normal;text-align:left;transform:scale(0.903,1);transform-origin:0px 20.93px;">ATTIVITA'</div>
<div style="left:950px;top:239px;width:262px;height:29px;background:#d2d2d2;"></div>
<div style="left:950px;top:239.57px;white-space:nowrap;line-height:27.3px;font-family:'Liberation Sans', sans-serif;font-size:21px;color:#3a3a3a;font-weight:normal;text-align:left;transform:scale(0.918,1);transform-origin:0px 20.93px;">Produzione</div>
<div style="left:1192px;top:244px;width:15px;height:19px;background:#fff;"></div>
<svg style="left:1192px;top:244px" width="15" height="19" viewBox="0 0 15 19"><path d="M2.2 8.9 C3.6 9.8 5 12 6.4 14.2 C8.2 10.5 10.5 6.5 13.4 3.6" fill="none" stroke="#000" stroke-width="2.5" stroke-linecap="round" stroke-linejoin="round"/></svg>
<div style="left:950px;top:269px;width:262px;height:29px;background:#d2d2d2;"></div>
<div style="left:950px;top:269.57px;white-space:nowrap;line-height:27.3px;font-family:'Liberation Sans', sans-serif;font-size:21px;color:#3a3a3a;font-weight:normal;text-align:left;transform:scale(0.918,1);transform-origin:0px 20.93px;">Trasporto</div>
<div style="left:1192px;top:274px;width:15px;height:19px;background:#fff;"></div>
<div style="left:950px;top:299px;width:262px;height:29px;background:#d2d2d2;"></div>
<div style="left:950px;top:299.57px;white-space:nowrap;line-height:27.3px;font-family:'Liberation Sans', sans-serif;font-size:21px;color:#3a3a3a;font-weight:normal;text-align:left;transform:scale(0.918,1);transform-origin:0px 20.93px;">Recupero</div>
<div style="left:1192px;top:304px;width:15px;height:19px;background:#fff;"></div>
<svg style="left:1192px;top:304px" width="15" height="19" viewBox="0 0 15 19"><path d="M2.2 8.9 C3.6 9.8 5 12 6.4 14.2 C8.2 10.5 10.5 6.5 13.4 3.6" fill="none" stroke="#000" stroke-width="2.5" stroke-linecap="round" stroke-linejoin="round"/></svg>
<div style="left:950px;top:329px;width:262px;height:29px;background:#d2d2d2;"></div>
<div style="left:950px;top:329.57px;white-space:nowrap;line-height:27.3px;font-family:'Liberation Sans', sans-serif;font-size:21px;color:#3a3a3a;font-weight:normal;text-align:left;transform:scale(0.918,1);transform-origin:0px 20.93px;">Intermediazione</div>
<div style="left:1192px;top:334px;width:15px;height:19px;background:#fff;"></div>
<div style="left:950px;top:359px;width:262px;height:29px;background:#d2d2d2;"></div>
<div style="left:950px;top:359.57px;white-space:nowrap;line-height:27.3px;font-family:'Liberation Sans', sans-serif;font-size:21px;color:#3a3a3a;font-weight:normal;text-align:left;transform:scale(0.918,1);transform-origin:0px 20.93px;">Smaltimento</div>
<div style="left:1192px;top:364px;width:15px;height:19px;background:#fff;"></div>
<svg style="left:1192px;top:364px" width="15" height="19" viewBox="0 0 15 19"><path d="M2.2 8.9 C3.6 9.8 5 12 6.4 14.2 C8.2 10.5 10.5 6.5 13.4 3.6" fill="none" stroke="#000" stroke-width="2.5" stroke-linecap="round" stroke-linejoin="round"/></svg>
<div style="left:1225px;top:209px;width:375px;height:29px;background:#585858;"></div>
<div style="left:1375px;top:209.07px;white-space:nowrap;line-height:27.3px;font-family:'Liberation Sans', sans-serif;font-size:21px;color:#f0f0f0;font-weight:normal;text-align:left;transform:scale(0.931,1);transform-origin:0px 20.93px;">ALTRO</div>
<div style="left:1225px;top:239px;width:262px;height:29px;background:#d2d2d2;"></div>
<div style="left:1225px;top:239.57px;white-space:nowrap;line-height:27.3px;font-family:'Liberation Sans', sans-serif;font-size:21px;color:#3a3a3a;font-weight:normal;text-align:left;transform:scale(0.918,1);transform-origin:0px 20.93px;">Veicoli fuori uso</div>
<div style="left:1467px;top:244px;width:15px;height:19px;background:#fff;"></div>
<div style="left:1225px;top:269px;width:262px;height:29px;background:#d2d2d2;"></div>
<div style="left:1225px;top:269.57px;white-space:nowrap;line-height:27.3px;font-family:'Liberation Sans', sans-serif;font-size:21px;color:#3a3a3a;font-weight:normal;text-align:left;transform:scale(0.918,1);transform-origin:0px 20.93px;">Raee</div>
<div style="left:1467px;top:274px;width:15px;height:19px;background:#fff;"></div>
<div style="left:1225px;top:299px;width:238px;height:29px;background:#d2d2d2;"></div>
<div style="left:1225px;top:299.57px;white-space:nowrap;line-height:27.3px;font-family:'Liberation Sans', sans-serif;font-size:21px;color:#3a3a3a;font-weight:normal;text-align:left;transform:scale(0.918,1);transform-origin:0px 20.93px;">Data cert. emas</div>
<div style="left:1463px;top:299px;width:136px;height:29px;background:#fff;box-sizing:border-box;border:1px solid #e2e2e2"></div>
<div style="left:1463.0px;top:300.27px;width:12.35px;line-height:26.39px;font-family:'Liberation Sans', sans-serif;font-size:20.3px;color:#222;font-weight:normal;text-align:center;">2</div>
<div style="left:1475.35px;top:300.27px;width:12.35px;line-height:26.39px;font-family:'Liberation Sans', sans-serif;font-size:20.3px;color:#222;font-weight:normal;text-align:center;">2</div>
<div style="left:1487.7px;top:300.27px;width:12.35px;line-height:26.39px;font-family:'Liberation Sans', sans-serif;font-size:20.3px;color:#222;font-weight:normal;text-align:center;">/</div>
<div style="left:1500.05px;top:300.27px;width:12.35px;line-height:26.39px;font-family:'Liberation Sans', sans-serif;font-size:20.3px;color:#222;font-weight:normal;text-align:center;">0</div>
<div style="left:1512.4px;top:300.27px;width:12.35px;line-height:26.39px;font-family:'Liberation Sans', sans-serif;font-size:20.3px;color:#222;font-weight:normal;text-align:center;">2</div>
<div style="left:1524.75px;top:300.27px;width:12.35px;line-height:26.39px;font-family:'Liberation Sans', sans-serif;font-size:20.3px;color:#222;font-weight:normal;text-align:center;">/</div>
<div style="left:1537.1px;top:300.27px;width:12.35px;line-height:26.39px;font-family:'Liberation Sans', sans-serif;font-size:20.3px;color:#222;font-weight:normal;text-align:center;">2</div>
<div style="left:1549.45px;top:300.27px;width:12.35px;line-height:26.39px;font-family:'Liberation Sans', sans-serif;font-size:20.3px;color:#222;font-weight:normal;text-align:center;">0</div>
<div style="left:1561.8px;top:300.27px;width:12.35px;line-height:26.39px;font-family:'Liberation Sans', sans-serif;font-size:20.3px;color:#222;font-weight:normal;text-align:center;">1</div>
<div style="left:1574.15px;top:300.27px;width:12.35px;line-height:26.39px;font-family:'Liberation Sans', sans-serif;font-size:20.3px;color:#222;font-weight:normal;text-align:center;">9</div>
<svg style="left:1589px;top:309px" width="8" height="9" viewBox="0 0 8 9"><path d="M0 1 H8 M0 4.5 H8 M0 8 H8" stroke="#333" stroke-width="1.6"/></svg>
<div style="left:1225px;top:329px;width:238px;height:29px;background:#d2d2d2;"></div>
<div style="left:1225px;top:329.57px;white-space:nowrap;line-height:27.3px;font-family:'Liberation Sans', sans-serif;font-size:21px;color:#3a3a3a;font-weight:normal;text-align:left;transform:scale(0.918,1);transform-origin:0px 20.93px;">Numero cert. emas</div>
<div style="left:1463px;top:329px;width:136px;height:29px;background:#fff;box-sizing:border-box;border:1px solid #e2e2e2"></div>
<div style="left:1225px;top:359px;width:238px;height:29px;background:#d2d2d2;"></div>
<div style="left:1225px;top:359.57px;white-space:nowrap;line-height:27.3px;font-family:'Liberation Sans', sans-serif;font-size:21px;color:#3a3a3a;font-weight:normal;text-align:left;transform:scale(0.918,1);transform-origin:0px 20.93px;">Data cert. ISO14000</div>
<div style="left:1463px;top:359px;width:136px;height:29px;background:#fff;box-sizing:border-box;border:1px solid #e2e2e2"></div>
<svg style="left:1589px;top:369px" width="8" height="9" viewBox="0 0 8 9"><path d="M0 1 H8 M0 4.5 H8 M0 8 H8" stroke="#333" stroke-width="1.6"/></svg>
<div style="left:150px;top:419px;width:1450px;height:29px;background:#585858;"></div>
<div style="left:661.6px;top:419.07px;white-space:nowrap;line-height:27.3px;font-family:'Liberation Sans', sans-serif;font-size:21px;color:#f0f0f0;font-weight:normal;text-align:left;transform:scale(0.917,1);transform-origin:0px 20.93px;">OPERAZIONI RECUPERO AUTORIZZATE</div>
<div style="left:150px;top:449px;width:75px;height:28px;background:#d2d2d2;"></div>
<div style="left:150px;top:449.57px;white-space:nowrap;line-height:27.3px;font-family:'Liberation Sans', sans-serif;font-size:21px;color:#3a3a3a;font-weight:normal;text-align:left;transform:scale(0.918,1);transform-origin:0px 20.93px;">R01</div>
<div style="left:205px;top:454px;width:15px;height:19px;background:#fff;"></div>
<div style="left:237px;top:449px;width:75px;height:28px;background:#d2d2d2;"></div>
<div style="left:237px;top:449.57px;white-space:nowrap;line-height:27.3px;font-family:'Liberation Sans', sans-serif;font-size:21px;color:#3a3a3a;font-weight:normal;text-align:left;transform:scale(0.918,1);transform-origin:0px 20.93px;">R02</div>
<div style="left:292px;top:454px;width:15px;height:19px;background:#fff;"></div>
<div style="left:325px;top:449px;width:75px;height:28px;background:#d2d2d2;"></div>
<div style="left:325px;top:449.57px;white-space:nowrap;line-height:27.3px;font-family:'Liberation Sans', sans-serif;font-size:21px;color:#3a3a3a;font-weight:normal;text-align:left;transform:scale(0.918,1);transform-origin:0px 20.93px;">R03</div>
<div style="left:380px;top:454px;width:15px;height:19px;background:#fff;"></div>
<div style="left:412px;top:449px;width:75px;height:28px;background:#d2d2d2;"></div>
<div style="left:412px;top:449.57px;white-space:nowrap;line-height:27.3px;font-family:'Liberation Sans', sans-serif;font-size:21px;color:#3a3a3a;font-weight:normal;text-align:left;transform:scale(0.918,1);transform-origin:0px 20.93px;">R04</div>
<div style="left:467px;top:454px;width:15px;height:19px;background:#fff;"></div>
<div style="left:500px;top:449px;width:75px;height:28px;background:#d2d2d2;"></div>
<div style="left:500px;top:449.57px;white-space:nowrap;line-height:27.3px;font-family:'Liberation Sans', sans-serif;font-size:21px;color:#3a3a3a;font-weight:normal;text-align:left;transform:scale(0.918,1);transform-origin:0px 20.93px;">R05</div>
<div style="left:555px;top:454px;width:15px;height:19px;background:#fff;"></div>
<div style="left:587px;top:449px;width:75px;height:28px;background:#d2d2d2;"></div>
<div style="left:587px;top:449.57px;white-space:nowrap;line-height:27.3px;font-family:'Liberation Sans', sans-serif;font-size:21px;color:#3a3a3a;font-weight:normal;text-align:left;transform:scale(0.918,1);transform-origin:0px 20.93px;">R06</div>
<div style="left:642px;top:454px;width:15px;height:19px;background:#fff;"></div>
<div style="left:675px;top:449px;width:75px;height:28px;background:#d2d2d2;"></div>
<div style="left:675px;top:449.57px;white-space:nowrap;line-height:27.3px;font-family:'Liberation Sans', sans-serif;font-size:21px;color:#3a3a3a;font-weight:normal;text-align:left;transform:scale(0.918,1);transform-origin:0px 20.93px;">R07</div>
<div style="left:730px;top:454px;width:15px;height:19px;background:#fff;"></div>
<div style="left:762px;top:449px;width:75px;height:28px;background:#d2d2d2;"></div>
<div style="left:762px;top:449.57px;white-space:nowrap;line-height:27.3px;font-family:'Liberation Sans', sans-serif;font-size:21px;color:#3a3a3a;font-weight:normal;text-align:left;transform:scale(0.918,1);transform-origin:0px 20.93px;">R08</div>
<div style="left:817px;top:454px;width:15px;height:19px;background:#fff;"></div>
<div style="left:850px;top:449px;width:75px;height:28px;background:#d2d2d2;"></div>
<div style="left:850px;top:449.57px;white-space:nowrap;line-height:27.3px;font-family:'Liberation Sans', sans-serif;font-size:21px;color:#3a3a3a;font-weight:normal;text-align:left;transform:scale(0.918,1);transform-origin:0px 20.93px;">R09</div>
<div style="left:905px;top:454px;width:15px;height:19px;background:#fff;"></div>
<div style="left:937px;top:449px;width:75px;height:28px;background:#d2d2d2;"></div>
<div style="left:937px;top:449.57px;white-space:nowrap;line-height:27.3px;font-family:'Liberation Sans', sans-serif;font-size:21px;color:#3a3a3a;font-weight:normal;text-align:left;transform:scale(0.918,1);transform-origin:0px 20.93px;">R10</div>
<div style="left:992px;top:454px;width:15px;height:19px;background:#fff;"></div>
<div style="left:1025px;top:449px;width:75px;height:28px;background:#d2d2d2;"></div>
<div style="left:1025px;top:449.57px;white-space:nowrap;line-height:27.3px;font-family:'Liberation Sans', sans-serif;font-size:21px;color:#3a3a3a;font-weight:normal;text-align:left;transform:scale(0.918,1);transform-origin:0px 20.93px;">R11</div>
<div style="left:1080px;top:454px;width:15px;height:19px;background:#fff;"></div>
<svg style="left:1080px;top:454px" width="15" height="19" viewBox="0 0 15 19"><path d="M2.2 8.9 C3.6 9.8 5 12 6.4 14.2 C8.2 10.5 10.5 6.5 13.4 3.6" fill="none" stroke="#000" stroke-width="2.5" stroke-linecap="round" stroke-linejoin="round"/></svg>
<div style="left:1112px;top:449px;width:75px;height:28px;background:#d2d2d2;"></div>
<div style="left:1112px;top:449.57px;white-space:nowrap;line-height:27.3px;font-family:'Liberation Sans', sans-serif;font-size:21px;color:#3a3a3a;font-weight:normal;text-align:left;transform:scale(0.918,1);transform-origin:0px 20.93px;">R12</div>
<div style="left:1167px;top:454px;width:15px;height:19px;background:#fff;"></div>
<svg style="left:1167px;top:454px" width="15" height="19" viewBox="0 0 15 19"><path d="M2.2 8.9 C3.6 9.8 5 12 6.4 14.2 C8.2 10.5 10.5 6.5 13.4 3.6" fill="none" stroke="#000" stroke-width="2.5" stroke-linecap="round" stroke-linejoin="round"/></svg>
<div style="left:1200px;top:449px;width:75px;height:28px;background:#d2d2d2;"></div>
<div style="left:1200px;top:449.57px;white-space:nowrap;line-height:27.3px;font-family:'Liberation Sans', sans-serif;font-size:21px;color:#3a3a3a;font-weight:normal;text-align:left;transform:scale(0.918,1);transform-origin:0px 20.93px;">R13</div>
<div style="left:1255px;top:454px;width:15px;height:19px;background:#fff;"></div>
<svg style="left:1255px;top:454px" width="15" height="19" viewBox="0 0 15 19"><path d="M2.2 8.9 C3.6 9.8 5 12 6.4 14.2 C8.2 10.5 10.5 6.5 13.4 3.6" fill="none" stroke="#000" stroke-width="2.5" stroke-linecap="round" stroke-linejoin="round"/></svg>
<div style="left:150px;top:509px;width:1450px;height:29px;background:#585858;"></div>
<div style="left:649.1px;top:509.07px;white-space:nowrap;line-height:27.3px;font-family:'Liberation Sans', sans-serif;font-size:21px;color:#f0f0f0;font-weight:normal;text-align:left;transform:scale(0.911,1);transform-origin:0px 20.93px;">OPERAZIONI SMALTIMENTO AUTORIZZATE</div>
<div style="left:150px;top:539px;width:75px;height:28px;background:#d2d2d2;"></div>
<div style="left:150px;top:539.57px;white-space:nowrap;line-height:27.3px;font-family:'Liberation Sans', sans-serif;font-size:21px;color:#3a3a3a;font-weight:normal;text-align:left;transform:scale(0.918,1);transform-origin:0px 20.93px;">S01</div>
<div style="left:205px;top:544px;width:15px;height:19px;background:#fff;"></div>
<div style="left:237px;top:539px;width:75px;height:28px;background:#d2d2d2;"></div>
<div style="left:237px;top:539.57px;white-space:nowrap;line-height:27.3px;font-family:'Liberation Sans', sans-serif;font-size:21px;color:#3a3a3a;font-weight:normal;text-align:left;transform:scale(0.918,1);transform-origin:0px 20.93px;">S02</div>
<div style="left:292px;top:544px;width:15px;height:19px;background:#fff;"></div>
<div style="left:325px;top:539px;width:75px;height:28px;background:#d2d2d2;"></div>
<div style="left:325px;top:539.57px;white-space:nowrap;line-height:27.3px;font-family:'Liberation Sans', sans-serif;font-size:21px;color:#3a3a3a;font-weight:normal;text-align:left;transform:scale(0.918,1);transform-origin:0px 20.93px;">S03</div>
<div style="left:380px;top:544px;width:15px;height:19px;background:#fff;"></div>
<div style="left:412px;top:539px;width:75px;height:28px;background:#d2d2d2;"></div>
<div style="left:412px;top:539.57px;white-space:nowrap;line-height:27.3px;font-family:'Liberation Sans', sans-serif;font-size:21px;color:#3a3a3a;font-weight:normal;text-align:left;transform:scale(0.918,1);transform-origin:0px 20.93px;">S04</div>
<div style="left:467px;top:544px;width:15px;height:19px;background:#fff;"></div>
<div style="left:500px;top:539px;width:75px;height:28px;background:#d2d2d2;"></div>
<div style="left:500px;top:539.57px;white-space:nowrap;line-height:27.3px;font-family:'Liberation Sans', sans-serif;font-size:21px;color:#3a3a3a;font-weight:normal;text-align:left;transform:scale(0.918,1);transform-origin:0px 20.93px;">S05</div>
<div style="left:555px;top:544px;width:15px;height:19px;background:#fff;"></div>
<div style="left:587px;top:539px;width:75px;height:28px;background:#d2d2d2;"></div>
<div style="left:587px;top:539.57px;white-space:nowrap;line-height:27.3px;font-family:'Liberation Sans', sans-serif;font-size:21px;color:#3a3a3a;font-weight:normal;text-align:left;transform:scale(0.918,1);transform-origin:0px 20.93px;">S06</div>
<div style="left:642px;top:544px;width:15px;height:19px;background:#fff;"></div>
<div style="left:675px;top:539px;width:75px;height:28px;background:#d2d2d2;"></div>
<div style="left:675px;top:539.57px;white-space:nowrap;line-height:27.3px;font-family:'Liberation Sans', sans-serif;font-size:21px;color:#3a3a3a;font-weight:normal;text-align:left;transform:scale(0.918,1);transform-origin:0px 20.93px;">S07</div>
<div style="left:730px;top:544px;width:15px;height:19px;background:#fff;"></div>
<div style="left:762px;top:539px;width:75px;height:28px;background:#d2d2d2;"></div>
<div style="left:762px;top:539.57px;white-space:nowrap;line-height:27.3px;font-family:'Liberation Sans', sans-serif;font-size:21px;color:#3a3a3a;font-weight:normal;text-align:left;transform:scale(0.918,1);transform-origin:0px 20.93px;">S08</div>
<div style="left:817px;top:544px;width:15px;height:19px;background:#fff;"></div>
<div style="left:850px;top:539px;width:75px;height:28px;background:#d2d2d2;"></div>
<div style="left:850px;top:539.57px;white-space:nowrap;line-height:27.3px;font-family:'Liberation Sans', sans-serif;font-size:21px;color:#3a3a3a;font-weight:normal;text-align:left;transform:scale(0.918,1);transform-origin:0px 20.93px;">S09</div>
<div style="left:905px;top:544px;width:15px;height:19px;background:#fff;"></div>
<div style="left:937px;top:539px;width:75px;height:28px;background:#d2d2d2;"></div>
<div style="left:937px;top:539.57px;white-space:nowrap;line-height:27.3px;font-family:'Liberation Sans', sans-serif;font-size:21px;color:#3a3a3a;font-weight:normal;text-align:left;transform:scale(0.918,1);transform-origin:0px 20.93px;">S10</div>
<div style="left:992px;top:544px;width:15px;height:19px;background:#fff;"></div>
<div style="left:1025px;top:539px;width:75px;height:28px;background:#d2d2d2;"></div>
<div style="left:1025px;top:539.57px;white-space:nowrap;line-height:27.3px;font-family:'Liberation Sans', sans-serif;font-size:21px;color:#3a3a3a;font-weight:normal;text-align:left;transform:scale(0.918,1);transform-origin:0px 20.93px;">S11</div>
<div style="left:1080px;top:544px;width:15px;height:19px;background:#fff;"></div>
<div style="left:1112px;top:539px;width:75px;height:28px;background:#d2d2d2;"></div>
<div style="left:1112px;top:539.57px;white-space:nowrap;line-height:27.3px;font-family:'Liberation Sans', sans-serif;font-size:21px;color:#3a3a3a;font-weight:normal;text-align:left;transform:scale(0.918,1);transform-origin:0px 20.93px;">S12</div>
<div style="left:1167px;top:544px;width:15px;height:19px;background:#fff;"></div>
<svg style="left:1167px;top:544px" width="15" height="19" viewBox="0 0 15 19"><path d="M2.2 8.9 C3.6 9.8 5 12 6.4 14.2 C8.2 10.5 10.5 6.5 13.4 3.6" fill="none" stroke="#000" stroke-width="2.5" stroke-linecap="round" stroke-linejoin="round"/></svg>
<div style="left:1200px;top:539px;width:75px;height:28px;background:#d2d2d2;"></div>
<div style="left:1200px;top:539.57px;white-space:nowrap;line-height:27.3px;font-family:'Liberation Sans', sans-serif;font-size:21px;color:#3a3a3a;font-weight:normal;text-align:left;transform:scale(0.918,1);transform-origin:0px 20.93px;">S13</div>
<div style="left:1255px;top:544px;width:15px;height:19px;background:#fff;"></div>
<svg style="left:1255px;top:544px" width="15" height="19" viewBox="0 0 15 19"><path d="M2.2 8.9 C3.6 9.8 5 12 6.4 14.2 C8.2 10.5 10.5 6.5 13.4 3.6" fill="none" stroke="#000" stroke-width="2.5" stroke-linecap="round" stroke-linejoin="round"/></svg>
<div style="left:1287px;top:539px;width:75px;height:28px;background:#d2d2d2;"></div>
<div style="left:1287px;top:539.57px;white-space:nowrap;line-height:27.3px;font-family:'Liberation Sans', sans-serif;font-size:21px;color:#3a3a3a;font-weight:normal;text-align:left;transform:scale(0.918,1);transform-origin:0px 20.93px;">S14</div>
<div style="left:1342px;top:544px;width:15px;height:19px;background:#fff;"></div>
<svg style="left:1342px;top:544px" width="15" height="19" viewBox="0 0 15 19"><path d="M2.2 8.9 C3.6 9.8 5 12 6.4 14.2 C8.2 10.5 10.5 6.5 13.4 3.6" fill="none" stroke="#000" stroke-width="2.5" stroke-linecap="round" stroke-linejoin="round"/></svg>
<div style="left:1375px;top:539px;width:75px;height:28px;background:#d2d2d2;"></div>
<div style="left:1375px;top:539.57px;white-space:nowrap;line-height:27.3px;font-family:'Liberation Sans', sans-serif;font-size:21px;color:#3a3a3a;font-weight:normal;text-align:left;transform:scale(0.918,1);transform-origin:0px 20.93px;">S15</div>
<div style="left:1430px;top:544px;width:15px;height:19px;background:#fff;"></div>
<svg style="left:1430px;top:544px" width="15" height="19" viewBox="0 0 15 19"><path d="M2.2 8.9 C3.6 9.8 5 12 6.4 14.2 C8.2 10.5 10.5 6.5 13.4 3.6" fill="none" stroke="#000" stroke-width="2.5" stroke-linecap="round" stroke-linejoin="round"/></svg>
<div style="left:150px;top:599px;width:1450px;height:29px;background:#585858;"></div>
<div style="left:762.1px;top:599.07px;white-space:nowrap;line-height:27.3px;font-family:'Liberation Sans', sans-serif;font-size:21px;color:#f0f0f0;font-weight:normal;text-align:left;transform:scale(0.923,1);transform-origin:0px 20.93px;">SEDE ATTIVITA'</div>
<div style="left:150px;top:629px;width:250px;height:29px;background:#d2d2d2;"></div>
<div style="left:150px;top:629.57px;white-space:nowrap;line-height:27.3px;font-family:'Liberation Sans', sans-serif;font-size:21px;color:#3a3a3a;font-weight:normal;text-align:left;transform:scale(0.918,1);transform-origin:0px 20.93px;">Indirizzo</div>
<div style="left:400px;top:629px;width:749px;height:29px;background:#fff;box-sizing:border-box;border:1px solid #e2e2e2"></div>
<div style="left:401px;top:631.62px;white-space:nowrap;line-height:26.78px;font-family:'Liberation Mono', monospace;font-size:20.6px;color:#363636;font-weight:normal;text-align:left;transform:scale(1,1.19);transform-origin:0px 18.88px;">VIA DEL CORSO 54</div>
<div style="left:150px;top:659px;width:250px;height:29px;background:#d2d2d2;"></div>
<div style="left:150px;top:659.57px;white-space:nowrap;line-height:27.3px;font-family:'Liberation Sans', sans-serif;font-size:21px;color:#3a3a3a;font-weight:normal;text-align:left;transform:scale(0.918,1);transform-origin:0px 20.93px;">Cap Localita' Prov</div>
<div style="left:400px;top:659px;width:62px;height:29px;background:#fff;box-sizing:border-box;border:1px solid #e2e2e2"></div>
<div style="left:401px;top:661.62px;white-space:nowrap;line-height:26.78px;font-family:'Liberation Mono', monospace;font-size:20.6px;color:#363636;font-weight:normal;text-align:left;transform:scale(1,1.19);transform-origin:0px 18.88px;">00100</div>
<div style="left:475px;top:659px;width:749px;height:29px;background:#fff;box-sizing:border-box;border:1px solid #e2e2e2"></div>
<div style="left:476px;top:661.62px;white-space:nowrap;line-height:26.78px;font-family:'Liberation Mono', monospace;font-size:20.6px;color:#363636;font-weight:normal;text-align:left;transform:scale(1,1.19);transform-origin:0px 18.88px;">ROMA</div>
<div style="left:1238px;top:659px;width:49px;height:29px;background:#fff;box-sizing:border-box;border:1px solid #e2e2e2"></div>
<div style="left:1238px;top:661.62px;white-space:nowrap;line-height:26.78px;font-family:'Liberation Mono', monospace;font-size:20.6px;color:#363636;font-weight:normal;text-align:left;transform:scale(1,1.19);transform-origin:0px 18.88px;">RM</div>
<div style="left:150.0px;top:719px;width:475px;height:29px;background:#585858;"></div>
<div style="left:200px;top:719.07px;white-space:nowrap;line-height:27.3px;font-family:'Liberation Sans', sans-serif;font-size:21px;color:#f0f0f0;font-weight:normal;text-align:left;transform:scale(0.921,1);transform-origin:0px 20.93px;">QUANTITA' COMPLESSIVA AUTORIZZATA</div>
<div style="left:150.0px;top:749px;width:250px;height:29px;background:#d2d2d2;"></div>
<div style="left:150.0px;top:749.57px;white-space:nowrap;line-height:27.3px;font-family:'Liberation Sans', sans-serif;font-size:21px;color:#3a3a3a;font-weight:normal;text-align:left;transform:scale(0.918,1);transform-origin:0px 20.93px;">Totale</div>
<div style="left:400.0px;top:749px;width:187px;height:29px;background:#fff;box-sizing:border-box;border:1px solid #e2e2e2"></div>
<div style="left:400.0px;top:751.62px;width:187.5px;line-height:26.78px;font-family:'Liberation Mono', monospace;font-size:20.6px;color:#363636;font-weight:normal;text-align:right;transform:scale(1,1.19);transform-origin:187.5px 18.88px;">20.000,00</div>
<div style="left:150.0px;top:779px;width:250px;height:29px;background:#d2d2d2;"></div>
<div style="left:150.0px;top:779.57px;white-space:nowrap;line-height:27.3px;font-family:'Liberation Sans', sans-serif;font-size:21px;color:#3a3a3a;font-weight:normal;text-align:left;transform:scale(0.918,1);transform-origin:0px 20.93px;">Rif. pericolosi</div>
<div style="left:400.0px;top:779px;width:187px;height:29px;background:#fff;box-sizing:border-box;border:1px solid #e2e2e2"></div>
<div style="left:400.0px;top:781.62px;width:187.5px;line-height:26.78px;font-family:'Liberation Mono', monospace;font-size:20.6px;color:#363636;font-weight:normal;text-align:right;transform:scale(1,1.19);transform-origin:187.5px 18.88px;">12.000,00</div>
<div style="left:150.0px;top:809px;width:250px;height:29px;background:#d2d2d2;"></div>
<div style="left:150.0px;top:809.57px;white-space:nowrap;line-height:27.3px;font-family:'Liberation Sans', sans-serif;font-size:21px;color:#3a3a3a;font-weight:normal;text-align:left;transform:scale(0.918,1);transform-origin:0px 20.93px;">Rif. non pericolosi</div>
<div style="left:400.0px;top:809px;width:187px;height:29px;background:#fff;box-sizing:border-box;border:1px solid #e2e2e2"></div>
<div style="left:400.0px;top:811.62px;width:187.5px;line-height:26.78px;font-family:'Liberation Mono', monospace;font-size:20.6px;color:#363636;font-weight:normal;text-align:right;transform:scale(1,1.19);transform-origin:187.5px 18.88px;">8.000,00</div>
<div style="left:637.5px;top:719px;width:475px;height:29px;background:#585858;"></div>
<div style="left:736.7px;top:719.07px;white-space:nowrap;line-height:27.3px;font-family:'Liberation Sans', sans-serif;font-size:21px;color:#f0f0f0;font-weight:normal;text-align:left;transform:scale(0.917,1);transform-origin:0px 20.93px;">QUANTITA' COINCENERIMENTO</div>
<div style="left:637.5px;top:749px;width:250px;height:29px;background:#d2d2d2;"></div>
<div style="left:637.5px;top:749.57px;white-space:nowrap;line-height:27.3px;font-family:'Liberation Sans', sans-serif;font-size:21px;color:#3a3a3a;font-weight:normal;text-align:left;transform:scale(0.918,1);transform-origin:0px 20.93px;">Totale</div>
<div style="left:887.5px;top:749px;width:187px;height:29px;background:#fff;box-sizing:border-box;border:1px solid #e2e2e2"></div>
<div style="left:887.5px;top:751.62px;width:187.5px;line-height:26.78px;font-family:'Liberation Mono', monospace;font-size:20.6px;color:#363636;font-weight:normal;text-align:right;transform:scale(1,1.19);transform-origin:187.5px 18.88px;">19.500,00</div>
<div style="left:637.5px;top:779px;width:250px;height:29px;background:#d2d2d2;"></div>
<div style="left:637.5px;top:779.57px;white-space:nowrap;line-height:27.3px;font-family:'Liberation Sans', sans-serif;font-size:21px;color:#3a3a3a;font-weight:normal;text-align:left;transform:scale(0.918,1);transform-origin:0px 20.93px;">Rif. pericolosi</div>
<div style="left:887.5px;top:779px;width:187px;height:29px;background:#fff;box-sizing:border-box;border:1px solid #e2e2e2"></div>
<div style="left:887.5px;top:781.62px;width:187.5px;line-height:26.78px;font-family:'Liberation Mono', monospace;font-size:20.6px;color:#363636;font-weight:normal;text-align:right;transform:scale(1,1.19);transform-origin:187.5px 18.88px;">9.500,00</div>
<div style="left:637.5px;top:809px;width:250px;height:29px;background:#d2d2d2;"></div>
<div style="left:637.5px;top:809.57px;white-space:nowrap;line-height:27.3px;font-family:'Liberation Sans', sans-serif;font-size:21px;color:#3a3a3a;font-weight:normal;text-align:left;transform:scale(0.918,1);transform-origin:0px 20.93px;">Rif. non pericolosi</div>
<div style="left:887.5px;top:809px;width:187px;height:29px;background:#fff;box-sizing:border-box;border:1px solid #e2e2e2"></div>
<div style="left:887.5px;top:811.62px;width:187.5px;line-height:26.78px;font-family:'Liberation Mono', monospace;font-size:20.6px;color:#363636;font-weight:normal;text-align:right;transform:scale(1,1.19);transform-origin:187.5px 18.88px;">10.000,00</div>
<div style="left:1125.0px;top:719px;width:475px;height:29px;background:#585858;"></div>
<div style="left:1211.7px;top:719.07px;white-space:nowrap;line-height:27.3px;font-family:'Liberation Sans', sans-serif;font-size:21px;color:#f0f0f0;font-weight:normal;text-align:left;transform:scale(0.924,1);transform-origin:0px 20.93px;">QUANTITA' RESIDUA DISCARICA</div>
<div style="left:1125.0px;top:749px;width:250px;height:29px;background:#d2d2d2;"></div>
<div style="left:1125.0px;top:749.57px;white-space:nowrap;line-height:27.3px;font-family:'Liberation Sans', sans-serif;font-size:21px;color:#3a3a3a;font-weight:normal;text-align:left;transform:scale(0.918,1);transform-origin:0px 20.93px;">Rif. inerti</div>
<div style="left:1375.0px;top:749px;width:187px;height:29px;background:#fff;box-sizing:border-box;border:1px solid #e2e2e2"></div>
<div style="left:1375.0px;top:751.62px;width:187.5px;line-height:26.78px;font-family:'Liberation Mono', monospace;font-size:20.6px;color:#363636;font-weight:normal;text-align:right;transform:scale(1,1.19);transform-origin:187.5px 18.88px;">5.000,00</div>
<div style="left:1125.0px;top:779px;width:250px;height:29px;background:#d2d2d2;"></div>
<div style="left:1125.0px;top:779.57px;white-space:nowrap;line-height:27.3px;font-family:'Liberation Sans', sans-serif;font-size:21px;color:#3a3a3a;font-weight:normal;text-align:left;transform:scale(0.918,1);transform-origin:0px 20.93px;">Rif. pericolosi</div>
<div style="left:1375.0px;top:779px;width:187px;height:29px;background:#fff;box-sizing:border-box;border:1px solid #e2e2e2"></div>
<div style="left:1375.0px;top:781.62px;width:187.5px;line-height:26.78px;font-family:'Liberation Mono', monospace;font-size:20.6px;color:#363636;font-weight:normal;text-align:right;transform:scale(1,1.19);transform-origin:187.5px 18.88px;">4.000,00</div>
<div style="left:1125.0px;top:809px;width:250px;height:29px;background:#d2d2d2;"></div>
<div style="left:1125.0px;top:809.57px;white-space:nowrap;line-height:27.3px;font-family:'Liberation Sans', sans-serif;font-size:21px;color:#3a3a3a;font-weight:normal;text-align:left;transform:scale(0.918,1);transform-origin:0px 20.93px;">Rif. non pericolosi</div>
<div style="left:1375.0px;top:809px;width:187px;height:29px;background:#fff;box-sizing:border-box;border:1px solid #e2e2e2"></div>
<div style="left:1375.0px;top:811.62px;width:187.5px;line-height:26.78px;font-family:'Liberation Mono', monospace;font-size:20.6px;color:#363636;font-weight:normal;text-align:right;transform:scale(1,1.19);transform-origin:187.5px 18.88px;">0,00</div>
<div style="left:1489px;top:871px;width:96px;height:52px;background:#6b6b6b;border-radius:4px"></div>
<div style="left:1588px;top:871px;width:58px;height:52px;background:#6b6b6b;border-radius:4px"></div>
<svg style="left:1492px;top:886px" width="22" height="22" viewBox="0 0 22 22"><circle cx="11" cy="11" r="10" fill="#7cc43a"/><path d="M5.5 11 L9.5 15 L16.5 7" fill="none" stroke="#fff" stroke-width="2.8"/></svg>
<div style="left:1516px;top:886.86px;white-space:nowrap;line-height:21.06px;font-family:'Liberation Sans', sans-serif;font-size:16.2px;color:#fff;font-weight:bold;text-align:left;transform:scaleX(0.86);transform-origin:0 0">Conferma</div>
<svg style="left:1591px;top:886px" width="22" height="22" viewBox="0 0 22 22"><circle cx="11" cy="11" r="10" fill="#d20a2e"/><path d="M6.5 6 L15.5 16 M15.5 6 L6.5 16" stroke="#fff" stroke-width="3"/></svg>
<div style="left:1615px;top:886.86px;white-space:nowrap;line-height:21.06px;font-family:'Liberation Sans', sans-serif;font-size:16.2px;color:#fff;font-weight:bold;text-align:left;transform:scaleX(0.86);transform-origin:0 0">Esci</div>
</body></html>
